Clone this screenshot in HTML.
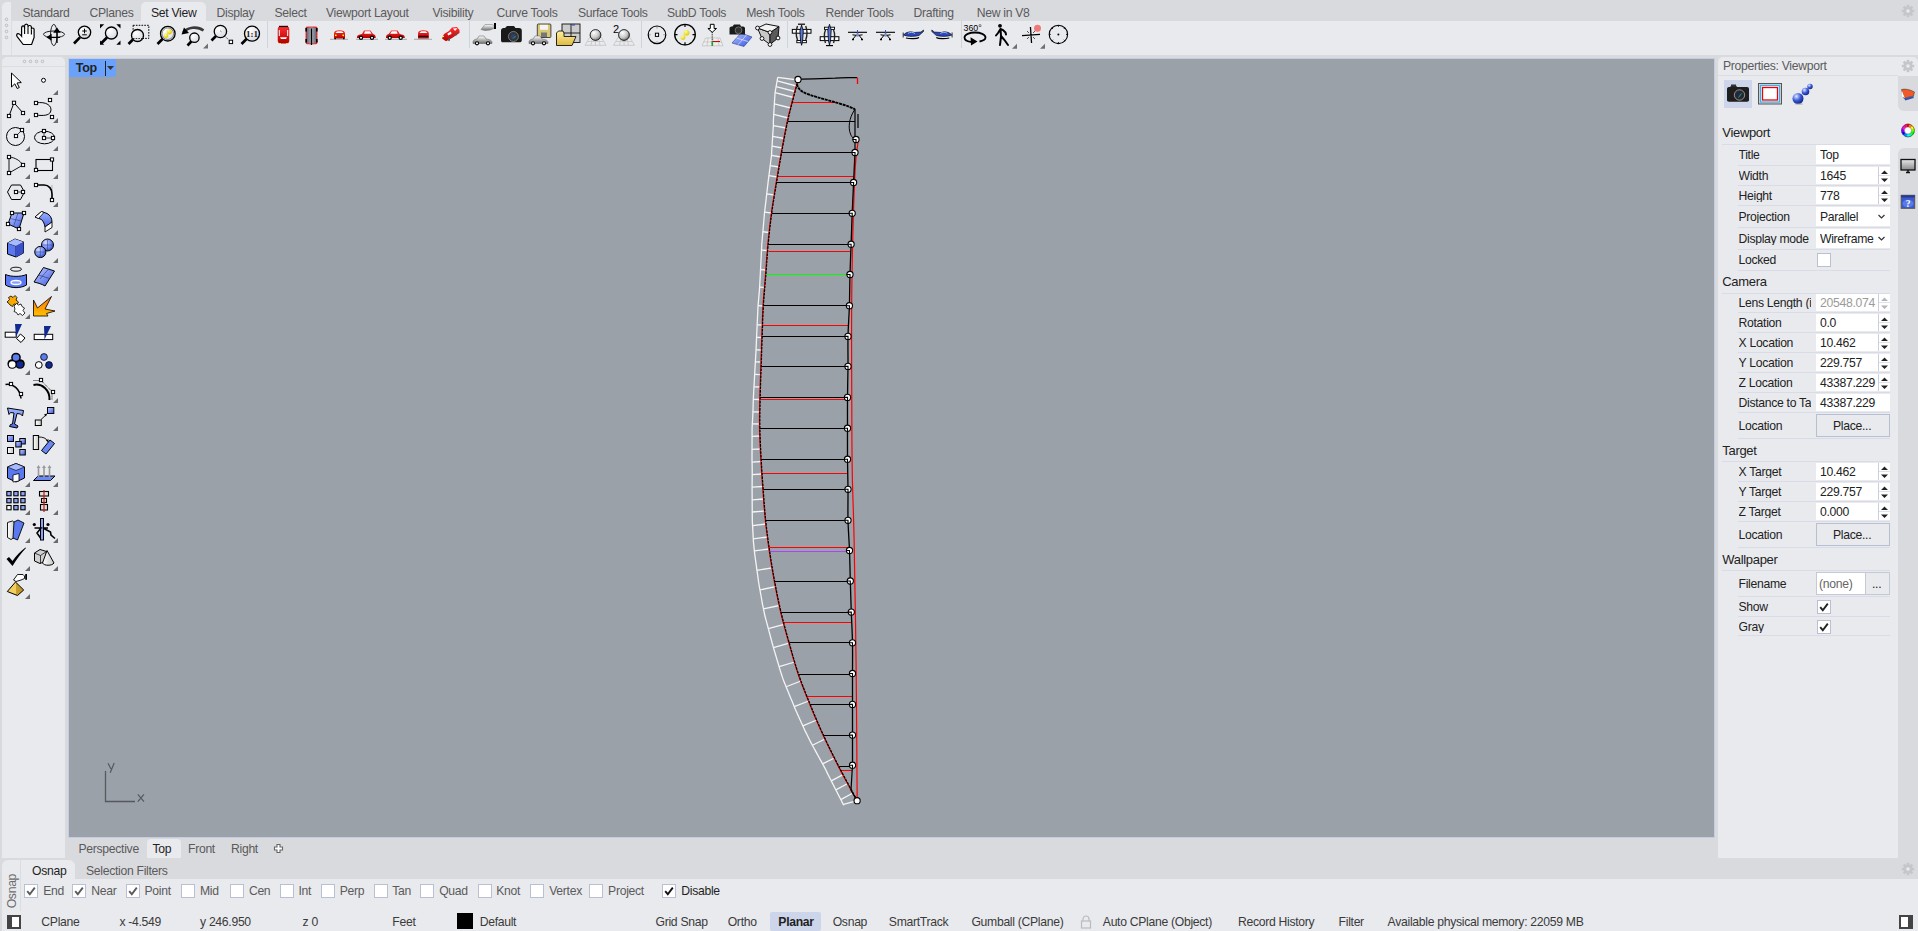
<!DOCTYPE html>
<html><head><meta charset="utf-8"><style>
html,body{margin:0;padding:0;}
body{width:1918px;height:931px;position:relative;overflow:hidden;background:#d9dade;font-family:"Liberation Sans", sans-serif;}
.t{position:absolute;white-space:nowrap;line-height:1;}
</style></head><body>
<div style="position:absolute;left:2px;top:2px;width:1916px;height:53px;background:#e9eaee;border-radius:5px 0 0 0;"></div><div style="position:absolute;left:11px;top:0px;width:1907px;height:21px;background:#d9dade;"></div><div style="position:absolute;left:140.5px;top:2px;width:65.5px;height:19px;background:#e9eaee;border-radius:5px 5px 0 0;"></div><div style="position:absolute;left:11px;top:21px;width:1px;height:34px;background:#dcdde1;"></div><svg style="position:absolute;left:4px;top:16px;" width="6" height="6" viewBox="0 0 6 6"><circle cx="2.5" cy="3.4" r="1.3" fill="none" stroke="#b5b7bd" stroke-width="0.9"/></svg><svg style="position:absolute;left:4px;top:22px;" width="6" height="6" viewBox="0 0 6 6"><circle cx="2.5" cy="3.4" r="1.3" fill="none" stroke="#b5b7bd" stroke-width="0.9"/></svg><svg style="position:absolute;left:4px;top:28px;" width="6" height="6" viewBox="0 0 6 6"><circle cx="2.5" cy="3.4" r="1.3" fill="none" stroke="#b5b7bd" stroke-width="0.9"/></svg><svg style="position:absolute;left:4px;top:34px;" width="6" height="6" viewBox="0 0 6 6"><circle cx="2.5" cy="3.4" r="1.3" fill="none" stroke="#b5b7bd" stroke-width="0.9"/></svg><div class="t" style="left:22.5px;top:6.70px;font-size:12.2px;letter-spacing:-0.30px;color:#5b5b5b;">Standard</div><div class="t" style="left:89.5px;top:6.70px;font-size:12.2px;letter-spacing:-0.30px;color:#5b5b5b;">CPlanes</div><div class="t" style="left:151px;top:6.70px;font-size:12.2px;letter-spacing:-0.30px;color:#1f1f1f;">Set View</div><div class="t" style="left:216.5px;top:6.70px;font-size:12.2px;letter-spacing:-0.30px;color:#5b5b5b;">Display</div><div class="t" style="left:274.5px;top:6.70px;font-size:12.2px;letter-spacing:-0.30px;color:#5b5b5b;">Select</div><div class="t" style="left:326px;top:6.70px;font-size:12.2px;letter-spacing:-0.30px;color:#5b5b5b;">Viewport Layout</div><div class="t" style="left:432.5px;top:6.70px;font-size:12.2px;letter-spacing:-0.30px;color:#5b5b5b;">Visibility</div><div class="t" style="left:496.6px;top:6.70px;font-size:12.2px;letter-spacing:-0.30px;color:#5b5b5b;">Curve Tools</div><div class="t" style="left:577.9px;top:6.70px;font-size:12.2px;letter-spacing:-0.30px;color:#5b5b5b;">Surface Tools</div><div class="t" style="left:667px;top:6.70px;font-size:12.2px;letter-spacing:-0.30px;color:#5b5b5b;">SubD Tools</div><div class="t" style="left:746.2px;top:6.70px;font-size:12.2px;letter-spacing:-0.30px;color:#5b5b5b;">Mesh Tools</div><div class="t" style="left:825.6px;top:6.70px;font-size:12.2px;letter-spacing:-0.30px;color:#5b5b5b;">Render Tools</div><div class="t" style="left:913.5px;top:6.70px;font-size:12.2px;letter-spacing:-0.30px;color:#5b5b5b;">Drafting</div><div class="t" style="left:976.7px;top:6.70px;font-size:12.2px;letter-spacing:-0.30px;color:#5b5b5b;">New in V8</div><div style="position:absolute;left:267px;top:21px;width:1px;height:27px;background:#cfd3dc;"></div><div style="position:absolute;left:469px;top:21px;width:1px;height:27px;background:#cfd3dc;"></div><div style="position:absolute;left:641px;top:21px;width:1px;height:27px;background:#cfd3dc;"></div><div style="position:absolute;left:787px;top:21px;width:1px;height:27px;background:#cfd3dc;"></div><div style="position:absolute;left:961px;top:21px;width:1px;height:27px;background:#cfd3dc;"></div><svg style="position:absolute;left:0px;top:0px;" width="1100" height="56" viewBox="0 0 1100 56"><defs>
<radialGradient id="glass" cx="0.35" cy="0.3" r="0.8"><stop offset="0" stop-color="#ffffff"/><stop offset="1" stop-color="#d5d7dc"/></radialGradient>
<radialGradient id="ball" cx="0.35" cy="0.3" r="0.75"><stop offset="0" stop-color="#ffffff"/><stop offset="0.6" stop-color="#c8c8c8"/><stop offset="1" stop-color="#6a6a6a"/></radialGradient>
<radialGradient id="yball" cx="0.35" cy="0.3" r="0.75"><stop offset="0" stop-color="#ffff90"/><stop offset="1" stop-color="#e0c800"/></radialGradient>
<linearGradient id="redg" x1="0" y1="0" x2="0" y2="1"><stop offset="0" stop-color="#ff3030"/><stop offset="1" stop-color="#b00000"/></linearGradient>
<linearGradient id="grayg" x1="0" y1="0" x2="1" y2="0"><stop offset="0" stop-color="#5a5f6a"/><stop offset="0.5" stop-color="#a8adb8"/><stop offset="1" stop-color="#5a5f6a"/></linearGradient>
<linearGradient id="carg" x1="0" y1="0" x2="0" y2="1"><stop offset="0" stop-color="#ffffff"/><stop offset="1" stop-color="#707070"/></linearGradient>
<linearGradient id="blueg" x1="0" y1="0" x2="1" y2="1"><stop offset="0" stop-color="#b8c8ff"/><stop offset="1" stop-color="#3050e0"/></linearGradient>
<linearGradient id="folderg" x1="0" y1="0" x2="0" y2="1"><stop offset="0" stop-color="#fff0a0"/><stop offset="1" stop-color="#e0b840"/></linearGradient>
</defs><path d="M23.2 44.5 L17.2 36.6 C16.2 35.2 16.6 33.6 18.2 33.6 C19.2 33.6 20.3 34.6 21.6 36.2 L21.6 28.2 C21.6 26.5 22.3 25.8 23.1 25.8 C23.9 25.8 24.6 26.5 24.6 28.2 L24.6 26 C24.6 24.8 25.3 24.1 26.3 24.1 C27.3 24.1 28 24.8 28 26 L28 27.5 C28 26.2 28.7 25.5 29.7 25.5 C30.7 25.5 31.4 26.2 31.4 27.5 L31.4 29.6 C31.4 28.6 32 28 32.7 28 C33.5 28 34.1 28.6 34.1 29.6 L34.1 37.5 L31.6 44.5 Z" fill="#fafafa" stroke="#000" stroke-width="1.2"/><path d="M24.6 28 V34 M28 27.5 V34 M31.4 29.6 V34.5" stroke="#000" stroke-width="1.1"/><ellipse cx="54" cy="34.3" rx="10.5" ry="3.3" fill="none" stroke="#222" stroke-width="1"/><ellipse cx="53.8" cy="35" rx="3.3" ry="10.6" fill="none" stroke="#222" stroke-width="1"/><path d="M57 43 V31 M54.5 32 L57 28.5 L59.5 32 Z M60 37.3 H50 M51 35 L47.5 37.3 L51 39.6 Z" stroke="#000" stroke-width="1.3" fill="#000"/><path d="M74 43.5 L80 37.3" stroke="#000" stroke-width="2.6" stroke-linecap="butt"/><circle cx="84.5" cy="32.3" r="6.2" fill="url(#glass)" stroke="#000" stroke-width="1.3"/><path d="M82.2 31 H86.8 M84.5 28.7 V33.3 M82.2 34.8 H86.8" stroke="#000" stroke-width="1"/><path d="M101.5 43 L107 37.5" stroke="#000" stroke-width="2.6" stroke-linecap="butt"/><circle cx="111.4" cy="33" r="6" fill="url(#glass)" stroke="#000" stroke-width="1.3"/><path d="M100 24.3 H104.2 L100 28.5 Z M120.5 24.3 H116.3 L120.5 28.5 Z M100 44.8 H104.2 L100 40.6 Z M120.5 44.8 H116.3 L120.5 40.6 Z" fill="#000"/><rect x="133.1" y="25.3" width="15.7" height="13.1" fill="none" stroke="#000" stroke-width="1" stroke-dasharray="1.6 1.2"/><path d="M128.5 44 L133 39.5" stroke="#000" stroke-width="2.6" stroke-linecap="butt"/><circle cx="137.5" cy="35.5" r="6" fill="url(#glass)" stroke="#000" stroke-width="1.3"/><path d="M133 38.5 H142" stroke="#000" stroke-width="0.8" stroke-dasharray="1.5 1.2"/><path d="M157.5 44 L162.5 39" stroke="#000" stroke-width="2.6" stroke-linecap="butt"/><circle cx="167.8" cy="33.7" r="7.3" fill="url(#glass)" stroke="#000" stroke-width="1.3"/><circle cx="167.8" cy="33.7" r="5.8" fill="none" stroke="#555" stroke-width="0.7"/><circle cx="169.3" cy="31.8" r="2.6" fill="url(#yball)"/><circle cx="166" cy="35.8" r="2.3" fill="url(#yball)"/><path d="M183.5 32.5 C187 27.5 197 25.5 203.5 30.5" fill="none" stroke="#3a3a3a" stroke-width="2.6"/><path d="M184 27.5 L181.5 34.5 L189 33 Z" fill="#000"/><path d="M187.5 45.5 L191.3 41.5" stroke="#000" stroke-width="2.6" stroke-linecap="butt"/><circle cx="194.4" cy="37.7" r="4.7" fill="url(#glass)" stroke="#000" stroke-width="1.3"/><path d="M208 48.5 L203 48.5 L208 43.5 Z" fill="#6f6f6f"/><path d="M211.5 40.5 L216 36" stroke="#000" stroke-width="2.6" stroke-linecap="butt"/><circle cx="220.4" cy="31.5" r="6.2" fill="url(#glass)" stroke="#000" stroke-width="1.3"/><path d="M220.5 31 L222 32.3 M224 35.5 L230 41" stroke="#000" stroke-width="0.9" stroke-dasharray="1 1.3"/><rect x="229.2" y="40.2" width="3.4" height="3.4" fill="#fff" stroke="#000" stroke-width="1"/><path d="M241.5 44 L246.5 39" stroke="#000" stroke-width="2.6" stroke-linecap="butt"/><circle cx="252" cy="33.7" r="7.5" fill="url(#glass)" stroke="#000" stroke-width="1.3"/><text x="252" y="37.2" font-family="Liberation Serif" font-weight="bold" font-size="9" text-anchor="middle" fill="#222">1:1</text><rect x="278" y="26.5" width="11" height="16.8" rx="2.5" fill="url(#redg)" stroke="#c00" stroke-width="0.5"/><rect x="279" y="25.8" width="9" height="1.3" fill="#111"/><path d="M279.3 30 V36 M287.7 30 V36" stroke="#fff" stroke-width="1"/><path d="M280 37.2 H287 L286 39 H281 Z" fill="#fff"/><path d="M279.5 43.5 H281 M286 43.5 H287.5" stroke="#ff0" stroke-width="0.8"/><rect x="306" y="27" width="11" height="16.8" rx="1" fill="url(#grayg)" stroke="#f00" stroke-width="0.8"/><path d="M306.2 28 V31.5 M316.8 28 V31.5 M306.2 39 V42.5 M316.8 39 V42.5" stroke="#000" stroke-width="1.6"/><path d="M311.5 28.5 V45" stroke="#000" stroke-width="1.2"/><path d="M330 39.3 H348" stroke="#8a8a8a" stroke-width="0.7"/><path d="M334 38.5 V33.5 C334 31 336 30.2 339.5 30.2 C343 30.2 345 31 345 33.5 V38.5 Z" fill="url(#redg)"/><path d="M335.5 33 C336 31.5 337.5 31.2 339.5 31.2 C341.5 31.2 343 31.5 343.5 33 Z" fill="#fff"/><rect x="335" y="34.6" width="1.6" height="1.5" fill="#ff0"/><rect x="342.4" y="34.6" width="1.6" height="1.5" fill="#ff0"/><path d="M334.5 38.6 H336 M343 38.6 H344.5" stroke="#000" stroke-width="1.3"/><path d="M356 39.3 H378" stroke="#8a8a8a" stroke-width="0.7"/><path d="M357 37 C357 35 359 34.5 362 34 L364 30.5 H370.5 L373 34 C375 34.5 375.7 35.5 375.7 37.5 L375.7 38 H357 Z" fill="url(#redg)"/><path d="M365 31.3 H370 L371.5 33.8 H364 Z" fill="#fff"/><circle cx="361" cy="37.8" r="1.6" fill="#fff" stroke="#000" stroke-width="1.2"/><circle cx="372" cy="37.8" r="1.6" fill="#fff" stroke="#000" stroke-width="1.2"/><path d="M385 39.3 H407" stroke="#8a8a8a" stroke-width="0.7"/><path d="M404.7 37 C404.7 35 402.7 34.5 399.7 34 L397.7 30.5 H391.2 L388.7 34 C386.7 34.5 386 35.5 386 37.5 L386 38 H404.7 Z" fill="url(#redg)"/><path d="M396.7 31.3 H391.7 L390.2 33.8 H397.7 Z" fill="#fff"/><circle cx="389.7" cy="37.8" r="1.6" fill="#fff" stroke="#000" stroke-width="1.2"/><circle cx="400.7" cy="37.8" r="1.6" fill="#fff" stroke="#000" stroke-width="1.2"/><path d="M414 39.3 H432" stroke="#8a8a8a" stroke-width="0.7"/><path d="M418 38.5 V33.5 C418 31 420 30.2 423.4 30.2 C426.8 30.2 428.8 31 428.8 33.5 V38.5 Z" fill="url(#redg)"/><path d="M419.5 33 C420 31.5 421.5 31.2 423.4 31.2 C425.3 31.2 426.8 31.5 427.3 33 Z" fill="#fff"/><rect x="418.5" y="35.8" width="9.8" height="1.2" fill="#000"/><path d="M442 38.5 L444 34 L449 31 L452 27.5 L457 27 L459.5 30 L459.5 33 L452 38 L446 41.3 Z" fill="url(#redg)"/><path d="M447.5 33.5 L451 31.5 L451.5 34 L448 35.5 Z M453 28.5 L457.5 28.3 L455 31 Z" fill="#fff"/><ellipse cx="449" cy="39.5" rx="1" ry="1.8" fill="#555"/><ellipse cx="456" cy="34" rx="1" ry="1.6" fill="#555"/><rect x="442.5" y="36" width="1.5" height="1" fill="#ff0"/><path d="M473 42 C473 40 475 39.3 477 39 L479 36 H484 L486 39 C490 39.5 492 40.5 492 42.5 V43.5 H473 Z" fill="url(#carg)" stroke="#555" stroke-width="0.5"/><circle cx="477" cy="43.3" r="1.6" fill="#fff" stroke="#000" stroke-width="1.1"/><circle cx="488" cy="43.3" r="1.6" fill="#fff" stroke="#000" stroke-width="1.1"/><path d="M481 29.5 L485 24.5 H492 L495 26 V28 L490 30 L485 30.5 Z" fill="url(#carg)" stroke="#666" stroke-width="0.5"/><rect x="494" y="23" width="2" height="6" fill="#000"/><path d="M501 30.5 C501 28.5 502.5 28 505 28 L507 26 H514 L515.5 28 H519 C521 28 521.8 29 521.8 30.5 V40 C521.8 41.5 521 42.3 519.5 42.3 H503 C501.5 42.3 501 41.5 501 40 Z" fill="#1a1a1a"/><circle cx="513.4" cy="36.5" r="5" fill="#333" stroke="#999" stroke-width="0.7"/><circle cx="513.4" cy="36.5" r="2.8" fill="#2a4070"/><path d="M513 38.5 L515.5 36" stroke="#3a9a3a" stroke-width="1"/><rect x="537.3" y="24" width="13.6" height="13.5" rx="1" fill="#d8c878" stroke="#222" stroke-width="0.8"/><rect x="540" y="24.8" width="8" height="5" fill="#f4f4f4"/><rect x="541" y="32.5" width="6" height="4.5" fill="#777"/><path d="M529 42 C529 40 531 39.3 533 39 L535 36 H540 L542 39 C546 39.5 548 40.5 548 42.5 V43.5 H529 Z" fill="url(#carg)" stroke="#555" stroke-width="0.5"/><circle cx="533" cy="43.3" r="1.6" fill="#fff" stroke="#000" stroke-width="1.1"/><circle cx="544" cy="43.3" r="1.6" fill="#fff" stroke="#000" stroke-width="1.1"/><rect x="562" y="24" width="18" height="18.5" fill="#ccc" stroke="#111" stroke-width="0.9"/><path d="M571 24 V42.5 M562 33 H580" stroke="#111" stroke-width="0.9"/><rect x="572" y="24.5" width="3" height="1" fill="#2040c0"/><path d="M556.5 45.5 V33 L558.5 31 H563 L564 33 V36.5 H576 L572 45.5 Z" fill="url(#folderg)" stroke="#111" stroke-width="0.9"/><path d="M585.0 45.3 L589.5 37.5 H601.5 L606.0 45.3 Z M587.2 41.5 H603.8 M592.5 37.5 L591.0 45.3 M598.5 37.5 L600.0 45.3 M595.5 37.5 V45.3" fill="none" stroke="#c4c4c4" stroke-width="0.8"/><circle cx="595.5" cy="35" r="5.4" fill="url(#ball)" stroke="#111" stroke-width="0.9"/><path d="M613.5 45.3 L618 37.5 H630 L634.5 45.3 Z M615.7 41.5 H632.3 M621 37.5 L619.5 45.3 M627 37.5 L628.5 45.3 M624 37.5 V45.3" fill="none" stroke="#c4c4c4" stroke-width="0.8"/><circle cx="624" cy="35" r="5.4" fill="url(#ball)" stroke="#111" stroke-width="0.9"/><text x="613" y="32.8" font-family="Liberation Sans" font-size="11" fill="#000">2</text><circle cx="657" cy="34.8" r="8.8" fill="none" stroke="#000" stroke-width="1.2"/><path d="M649 34.8 H650.8 M663.2 34.8 H665 M657 27 V28.5 M657 41.2 V42.6" stroke="#888" stroke-width="0.8"/><rect x="655.4" y="33.2" width="3.2" height="3.2" fill="#fff" stroke="#000" stroke-width="1"/><circle cx="685" cy="34.6" r="10.3" fill="none" stroke="#000" stroke-width="1.3"/><path d="M674.5 34.6 H677.5 M692.5 34.6 H695.5 M685 24 V27 M685 42.3 V45.3" stroke="#000" stroke-width="1.2"/><circle cx="686.6" cy="32.8" r="2.8" fill="url(#yball)"/><circle cx="683" cy="37.5" r="2.4" fill="url(#yball)"/><path d="M702 45.8 L705.5 38 H720 L723 45.8 Z M703.5 42 H722 M708 38 L707 45.8 M713 38 V45.8 M718 38 L719 45.8" fill="#eee" stroke="#bbb" stroke-width="0.7"/><path d="M712.2 32 V45.5" stroke="#000" stroke-width="0.9" stroke-dasharray="1 0.8"/><path d="M712.2 41.5 V46" stroke="#0a0" stroke-width="1.1"/><path d="M713 41.5 H720" stroke="#d00" stroke-width="1"/><path d="M710.3 24.3 H714.1 V28.5 H716.5 L712.2 32.3 L707.9 28.5 H710.3 Z" fill="#fff" stroke="#000" stroke-width="1"/><path d="M732 43 L741 33 L752 37 L744 46.5 Z" fill="url(#blueg)" stroke="#2a3a8a" stroke-width="0.6"/><path d="M736.5 38 L748 41.5 M746.5 35 L738 44.7" stroke="#eaeaff" stroke-width="0.7"/><path d="M729.5 28.5 C729.5 27 730.5 26.5 732.5 26.5 L734 24.5 H740 L741 26.5 H743 C744.5 26.5 745 27.5 745 28.5 V34.5 H729.5 Z" fill="#1a1a1a"/><circle cx="738.5" cy="30.3" r="3.4" fill="#333" stroke="#999" stroke-width="0.6"/><path d="M757.5 28 L770 32.5 L770 44.5 L762 38.5 Z" fill="#c8c8c8" stroke="#111" stroke-width="1"/><path d="M770 32.5 L779 26.5 L778 38 L770 44.5 Z" fill="#5a5a5a" stroke="#111" stroke-width="1"/><path d="M757.5 28 L766 24 L779 26.5 L770 32.5 Z" fill="#f2f2f2" stroke="#111" stroke-width="1"/><circle cx="757.5" cy="28" r="1.9" fill="#fff" stroke="#000" stroke-width="0.9"/><circle cx="770" cy="32.5" r="1.9" fill="#fff" stroke="#000" stroke-width="0.9"/><circle cx="762" cy="38.5" r="1.9" fill="#fff" stroke="#000" stroke-width="0.9"/><circle cx="778" cy="38" r="1.9" fill="#fff" stroke="#000" stroke-width="0.9"/><circle cx="770" cy="44.5" r="1.9" fill="#fff" stroke="#000" stroke-width="0.9"/><rect x="792.3" y="29.4" width="18.7" height="3.8" fill="#fff" stroke="#000" stroke-width="1"/><rect x="796.8" y="40.5" width="9.6" height="2.2" fill="#fff" stroke="#000" stroke-width="0.9"/><path d="M798 24.2 H805" stroke="#000" stroke-width="1.2"/><path d="M801.6 25 L803.3 31 L802.6 41 L801.6 45.3 L800.6 41 L799.9 31 Z" fill="#5878e0" stroke="#000" stroke-width="0.8"/><path d="M797.5 26 C796 30 796 36 797.5 40 M805.7 26 C807.2 30 807.2 36 805.7 40" fill="none" stroke="#222" stroke-width="1.4"/><rect x="820.2" y="36.7" width="18.7" height="3.9" fill="#fff" stroke="#000" stroke-width="1"/><rect x="824.5" y="27.2" width="10" height="2.2" fill="#fff" stroke="#000" stroke-width="0.9"/><path d="M826 45.6 H833" stroke="#000" stroke-width="1.2"/><path d="M829.5 24.3 L831.2 30 L830.5 41 L829.5 45 L828.5 41 L827.8 30 Z" fill="#5878e0" stroke="#000" stroke-width="0.8"/><path d="M825.5 30 C824 33 824 39 825.5 43 M833.5 30 C835 33 835 39 833.5 43" fill="none" stroke="#222" stroke-width="1.4"/><path d="M848.0 32.3 H867.0" stroke="#000" stroke-width="1.1"/><path d="M857.5 30 V35" stroke="#3050d0" stroke-width="1"/><circle cx="857.5" cy="35" r="1.8" fill="#8090c0"/><path d="M852.5 34.8 L856.0 35.3 L853.0 39 M862.5 34.8 L859.0 35.3 L862.0 39" fill="none" stroke="#000" stroke-width="1"/><path d="M852.0 39.5 H854.0 M861.0 39.5 H863.0" stroke="#000" stroke-width="1.3"/><path d="M876.0 32.3 H895.0" stroke="#000" stroke-width="1.1"/><path d="M885.5 30 V35" stroke="#3050d0" stroke-width="1"/><circle cx="885.5" cy="35" r="1.8" fill="#8090c0"/><path d="M880.5 34.8 L884.0 35.3 L881.0 39 M890.5 34.8 L887.0 35.3 L890.0 39" fill="none" stroke="#000" stroke-width="1"/><path d="M880.0 39.5 H882.0 M889.0 39.5 H891.0" stroke="#000" stroke-width="1.3"/><path d="M903.5 35 C906 32 911 31 914 32.5 L921 32 L923.5 30 L923.5 31.5 L919 35.5 C914 36.5 908 37 903.5 35 Z" fill="#2848c0" stroke="#000" stroke-width="0.6"/><path d="M908 33.3 C910 32 913 32 915 33.5" fill="none" stroke="#c8d4ff" stroke-width="0.8"/><path d="M903.2 32.5 V37.5" stroke="#000" stroke-width="0.8"/><path d="M906 38 C910 39 917 39 919 37.5" fill="none" stroke="#000" stroke-width="1.2"/><path d="M951.8 35 C949.3 32 944.3 31 941.3 32.5 L934.3 32 L931.8 30 L931.8 31.5 L936.3 35.5 C941.3 36.5 947.3 37 951.8 35 Z" fill="#2848c0" stroke="#000" stroke-width="0.6"/><path d="M947.3 33.3 C945.3 32 942.3 32 940.3 33.5" fill="none" stroke="#c8d4ff" stroke-width="0.8"/><path d="M952.1 32.5 V37.5" stroke="#000" stroke-width="0.8"/><path d="M949.3 38 C945.3 39 938.3 39 936.3 37.5" fill="none" stroke="#000" stroke-width="1.2"/><text x="963.5" y="30.6" font-family="Liberation Sans" font-size="8.8" fill="#000">360°</text><path d="M972 42 C966 41.5 964.5 39.5 964.5 37.5 C964.5 34.5 969.5 32.5 975 32.5 C980.5 32.5 985.5 34.5 985.5 37.5 C985.5 39.5 983 40.8 979.5 41.5" fill="none" stroke="#000" stroke-width="1.8"/><path d="M970.5 37.3 L977.5 41.5 L971 45.5 Z" fill="#000"/><circle cx="1000" cy="25.8" r="1.9" fill="#000"/><path d="M1000.5 29 L998 33 L996 35.5 M1000.5 29 L1003 30 L1005.5 32.5 L1006 34.5 M1000.5 29 L1001 36 L1000.5 41 L1000 45 M1001 36 L1004.5 40 L1008 45" fill="none" stroke="#000" stroke-width="2" stroke-linecap="round"/><path d="M1017 48.8 L1012 48.8 L1017 43.8 Z" fill="#6f6f6f"/><path d="M1031 27 V43 M1022 35 H1040" stroke="#000" stroke-width="1.3" transform="rotate(-4 1031 35)"/><path d="M1027 31 L1029 33 M1035 31 L1033 33 M1027 39 L1029 37 M1035 39 L1033 37" stroke="#444" stroke-width="0.9"/><circle cx="1037.5" cy="28.3" r="3.5" fill="#f07878"/><path d="M1045 48.8 L1040 48.8 L1045 43.8 Z" fill="#6f6f6f"/><circle cx="1058.4" cy="34.4" r="9.2" fill="none" stroke="#000" stroke-width="1.1"/><path d="M1058.4 25.2 V26.8 M1058.4 42 V43.6 M1049.2 34.4 H1050.8 M1066 34.4 H1067.6 M1052 28 L1053 29 M1064.8 28 L1063.8 29 M1052 40.8 L1053 39.8 M1064.8 40.8 L1063.8 39.8" stroke="#000" stroke-width="0.9"/><circle cx="1058.4" cy="34.4" r="1" fill="#000"/></svg><div style="position:absolute;left:2px;top:57px;width:63px;height:801px;background:#e9eaee;border-radius:5px 5px 0 0;"></div><div style="position:absolute;left:2px;top:66px;width:63px;height:1px;background:#dcdde1;"></div><svg style="position:absolute;left:21px;top:58px;" width="6" height="6" viewBox="0 0 6 6"><circle cx="3.5" cy="3.4" r="1.3" fill="none" stroke="#b5b7bd" stroke-width="0.9"/></svg><svg style="position:absolute;left:27px;top:58px;" width="6" height="6" viewBox="0 0 6 6"><circle cx="3.5" cy="3.4" r="1.3" fill="none" stroke="#b5b7bd" stroke-width="0.9"/></svg><svg style="position:absolute;left:33px;top:58px;" width="6" height="6" viewBox="0 0 6 6"><circle cx="3.5" cy="3.4" r="1.3" fill="none" stroke="#b5b7bd" stroke-width="0.9"/></svg><svg style="position:absolute;left:39px;top:58px;" width="6" height="6" viewBox="0 0 6 6"><circle cx="3.5" cy="3.4" r="1.3" fill="none" stroke="#b5b7bd" stroke-width="0.9"/></svg><svg style="position:absolute;left:0px;top:60px;" width="66" height="560" viewBox="0 0 66 560"><g transform="translate(0 -60)"><defs>
<linearGradient id="lb" x1="0" y1="0" x2="1" y2="1"><stop offset="0" stop-color="#c4d0ff"/><stop offset="1" stop-color="#3a58e0"/></linearGradient>
<linearGradient id="lb2" x1="0" y1="0" x2="0" y2="1"><stop offset="0" stop-color="#9fb4ff"/><stop offset="1" stop-color="#4a66e6"/></linearGradient>
<radialGradient id="sph" cx="0.35" cy="0.3" r="0.8"><stop offset="0" stop-color="#d8e0ff"/><stop offset="0.6" stop-color="#6a84f0"/><stop offset="1" stop-color="#2a40b0"/></radialGradient>
<linearGradient id="org" x1="0" y1="0" x2="0" y2="1"><stop offset="0" stop-color="#ff7000"/><stop offset="1" stop-color="#ffc000"/></linearGradient>
<linearGradient id="wg" x1="0" y1="0" x2="1" y2="0"><stop offset="0" stop-color="#ffffff"/><stop offset="1" stop-color="#c8c8c8"/></linearGradient>
<linearGradient id="gold" x1="0" y1="0" x2="1" y2="0"><stop offset="0" stop-color="#f0d070"/><stop offset="0.55" stop-color="#f4cc58"/><stop offset="0.56" stop-color="#c8a030"/><stop offset="1" stop-color="#c09020"/></linearGradient>
</defs><path d="M11.5 73 V87 L14.8 83.8 L17.2 88.5 L19.3 87.5 L17 83 L21.3 82.5 Z" fill="#fff" stroke="#000" stroke-width="1"/><circle cx="43.5" cy="80.3" r="2" fill="#fff" stroke="#000" stroke-width="1"/><path d="M58 95 L53 95 L58 90 Z" fill="#6a6a6a"/><path d="M9 116 L14 102.8 L23 113" fill="none" stroke="#000" stroke-width="1"/><rect x="7.40" y="114.40" width="3.2" height="3.2" fill="#fff" stroke="#000" stroke-width="1"/><rect x="12.40" y="101.20" width="3.2" height="3.2" fill="#fff" stroke="#000" stroke-width="1"/><rect x="21.40" y="111.40" width="3.2" height="3.2" fill="#fff" stroke="#000" stroke-width="1"/><path d="M36 103 C46 101 53 106 50.5 112 C49 115.5 43 116 36 115" fill="none" stroke="#000" stroke-width="1"/><rect x="34.40" y="101.40" width="3.2" height="3.2" fill="#fff" stroke="#000" stroke-width="1"/><rect x="48.40" y="98.40" width="3.2" height="3.2" fill="#fff" stroke="#000" stroke-width="1"/><rect x="34.40" y="113.40" width="3.2" height="3.2" fill="#fff" stroke="#000" stroke-width="1"/><rect x="50.40" y="115.40" width="3.2" height="3.2" fill="#fff" stroke="#000" stroke-width="1"/><path d="M30 123 L25 123 L30 118 Z" fill="#6a6a6a"/><path d="M58 123 L53 123 L58 118 Z" fill="#6a6a6a"/><circle cx="15.5" cy="136.5" r="9" fill="none" stroke="#000" stroke-width="1"/><path d="M16 136 L22 130" stroke="#000" stroke-width="0.7"/><rect x="14.40" y="134.40" width="3.2" height="3.2" fill="#fff" stroke="#000" stroke-width="1"/><rect x="20.40" y="128.40" width="3.2" height="3.2" fill="#fff" stroke="#000" stroke-width="1"/><ellipse cx="44.5" cy="137.5" rx="10" ry="6.3" fill="none" stroke="#000" stroke-width="1"/><path d="M44 131 V138 H53" fill="none" stroke="#000" stroke-width="0.7"/><rect x="42.40" y="129.40" width="3.2" height="3.2" fill="#fff" stroke="#000" stroke-width="1"/><rect x="42.40" y="136.40" width="3.2" height="3.2" fill="#fff" stroke="#000" stroke-width="1"/><rect x="51.40" y="136.40" width="3.2" height="3.2" fill="#fff" stroke="#000" stroke-width="1"/><path d="M30 151 L25 151 L30 146 Z" fill="#6a6a6a"/><path d="M58 151 L53 151 L58 146 Z" fill="#6a6a6a"/><path d="M9 157 C15 157.5 20 160.5 23 165 M23 165 L9 173 M9 173 V157" fill="none" stroke="#000" stroke-width="0.9"/><rect x="7.40" y="155.40" width="3.2" height="3.2" fill="#fff" stroke="#000" stroke-width="1"/><rect x="21.40" y="163.40" width="3.2" height="3.2" fill="#fff" stroke="#000" stroke-width="1"/><rect x="7.40" y="171.40" width="3.2" height="3.2" fill="#fff" stroke="#000" stroke-width="1"/><rect x="36" y="159.5" width="16.5" height="11" fill="none" stroke="#000" stroke-width="1.1"/><rect x="34.40" y="168.40" width="3.2" height="3.2" fill="#fff" stroke="#000" stroke-width="1"/><rect x="50.40" y="157.90" width="3.2" height="3.2" fill="#fff" stroke="#000" stroke-width="1"/><path d="M30 179 L25 179 L30 174 Z" fill="#6a6a6a"/><path d="M58 179 L53 179 L58 174 Z" fill="#6a6a6a"/><path d="M7.5 192 L11.5 185 H20.5 L24.5 192 L20.5 199.5 H11.5 Z" fill="none" stroke="#000" stroke-width="1"/><path d="M16 192 H23" stroke="#000" stroke-width="0.7"/><rect x="14.40" y="190.40" width="3.2" height="3.2" fill="#fff" stroke="#000" stroke-width="1"/><rect x="21.40" y="190.40" width="3.2" height="3.2" fill="#fff" stroke="#000" stroke-width="1"/><path d="M52 185 V200" stroke="#999" stroke-width="0.7"/><path d="M36 185 H44 C49 185 52 189 52 194 V200" fill="none" stroke="#000" stroke-width="1.6"/><rect x="34.40" y="183.40" width="3.2" height="3.2" fill="#fff" stroke="#000" stroke-width="1"/><rect x="50.40" y="198.40" width="3.2" height="3.2" fill="#fff" stroke="#000" stroke-width="1"/><path d="M30 207 L25 207 L30 202 Z" fill="#6a6a6a"/><path d="M58 207 L53 207 L58 202 Z" fill="#6a6a6a"/><path d="M12 213 H24 L19 229 L8 224 Z" fill="url(#lb)" stroke="#000" stroke-width="1"/><path d="M10 218.5 L21.5 221 M18 213 L13.5 226.5" stroke="#2a3a90" stroke-width="0.6"/><rect x="10.40" y="211.40" width="3.2" height="3.2" fill="#fff" stroke="#000" stroke-width="1"/><rect x="22.40" y="211.40" width="3.2" height="3.2" fill="#fff" stroke="#000" stroke-width="1"/><rect x="6.40" y="222.40" width="3.2" height="3.2" fill="#fff" stroke="#000" stroke-width="1"/><rect x="17.40" y="227.40" width="3.2" height="3.2" fill="#fff" stroke="#000" stroke-width="1"/><path d="M35 217 L41.5 211.5 L47 213.5 C50 215 52 218 52 222 L45 227 C44.5 224 43.5 221.5 41.5 219.5 Z" fill="url(#lb2)" stroke="#000" stroke-width="1"/><path d="M35 217 L41.5 211.5 L44 212.5 L38.5 218.5 Z" fill="#fff" stroke="#000" stroke-width="0.8"/><path d="M52 222 V227.5 L45 232 V227 Z" fill="#fff" stroke="#000" stroke-width="0.9"/><path d="M30 235 L25 235 L30 230 Z" fill="#6a6a6a"/><path d="M58 235 L53 235 L58 230 Z" fill="#6a6a6a"/><path d="M7.5 243 L15 239 L23.5 242 V253 L16 257 L7.5 254 Z" fill="#5a78f0" stroke="#000" stroke-width="1"/><path d="M7.5 243 L16 246 L23.5 242 M16 246 V257" fill="none" stroke="#000" stroke-width="0.7"/><path d="M7.5 243 L15 239 L23.5 242 L16 246 Z" fill="#a8baff"/><path d="M16 246 L23.5 242 V253 L16 257 Z" fill="#3a50c8"/><circle cx="47.5" cy="245" r="6" fill="url(#sph)" stroke="#000" stroke-width="1"/><circle cx="40.3" cy="252" r="5.6" fill="url(#sph)" stroke="#000" stroke-width="1"/><path d="M35 252 H45.5 M40.3 247 V257 M42 245 H53 M47.5 239.5 V251" stroke="#203080" stroke-width="0.5"/><path d="M30 263 L25 263 L30 258 Z" fill="#6a6a6a"/><path d="M58 263 L53 263 L58 258 Z" fill="#6a6a6a"/><ellipse cx="16" cy="269.2" rx="5.5" ry="2" fill="none" stroke="#000" stroke-width="0.9"/><path d="M5.5 274.5 C11 277 21 277 26.5 274.5 V285 C21 288.5 11 288.5 5.5 285 Z" fill="#5a78f0" stroke="#000" stroke-width="1"/><ellipse cx="16" cy="282.5" rx="5" ry="2" fill="#8aa0ff" stroke="#fff" stroke-width="1.3"/><path d="M34 282 L43.5 267.5 C47 269 51 269.5 54.5 271 L45 286 C42 284 38 283 34 282 Z" fill="url(#lb)" stroke="#000" stroke-width="1"/><path d="M38.5 275 L49.5 278.5 M40 279 C43 275 46 272 49 268.7" fill="none" stroke="#203080" stroke-width="0.6"/><path d="M30 291 L25 291 L30 286 Z" fill="#6a6a6a"/><path d="M58 291 L53 291 L58 286 Z" fill="#6a6a6a"/><path d="M7 302 L9.5 299.5 L8.5 297.5 L11 296 L13 297.5 L15 295.5 L17 297.5 L16 300 L18.5 302 L17 304.5 L14 304 L12.5 306.5 L10 305 L9 303.5 Z" fill="#f8a800" stroke="#000" stroke-width="0.8"/><path d="M14 306 L16.5 303.5 L18.5 305 L21 304 L22 306.5 L24.5 308 L23 310.5 L25 313 L22.5 315.5 L20 313.5 L18 315 L16.5 312.5 L14 311.5 L15 309 Z" fill="#fff" stroke="#000" stroke-width="0.8"/><path d="M33.5 316 V300 L37.5 308 L51.5 296.5 L45 309 L55 311 L46.5 313.5 L48 316 Z" fill="url(#org)" stroke="#000" stroke-width="0.8"/><path d="M30 319 L25 319 L30 314 Z" fill="#6a6a6a"/><rect x="5.2" y="332.2" width="11" height="5" fill="#fff" stroke="#000" stroke-width="1"/><path d="M15 324 H22 L16 337 Z" fill="#102a90"/><path d="M16.5 338.5 L20.5 334 L25 338 L21 342.5 Z" fill="#fff" stroke="#000" stroke-width="1"/><rect x="34.2" y="334.3" width="18.5" height="5.3" fill="#fff" stroke="#000" stroke-width="1"/><path d="M44 326 H51 L44.5 339.5 Z" fill="#102a90"/><circle cx="16" cy="357.5" r="4.8" fill="#000"/><circle cx="12.2" cy="364" r="4.8" fill="#000"/><circle cx="20" cy="364" r="4.8" fill="#000"/><circle cx="16" cy="357.5" r="3.3" fill="#5a7cf0"/><circle cx="12.2" cy="364.5" r="3.3" fill="#fff"/><circle cx="20" cy="364.5" r="3.3" fill="#102a90"/><circle cx="44" cy="357" r="3.4" fill="#5a7cf0" stroke="#000" stroke-width="0.8"/><circle cx="38.8" cy="365" r="3.4" fill="#fff" stroke="#000" stroke-width="1"/><circle cx="49" cy="365" r="3.4" fill="#102a90" stroke="#000" stroke-width="0.8"/><path d="M30 375 L25 375 L30 370 Z" fill="#6a6a6a"/><path d="M5.5 384.5 C13 383 20 389 21 398.5" fill="none" stroke="#000" stroke-width="1.5"/><rect x="9.40" y="382.40" width="3.2" height="3.2" fill="#fff" stroke="#000" stroke-width="1"/><rect x="19.40" y="392.40" width="3.2" height="3.2" fill="#fff" stroke="#000" stroke-width="1"/><path d="M33.5 385 C42 383 50 390 49.5 400" fill="none" stroke="#000" stroke-width="2"/><path d="M33.5 380.5 H41 L52 391.5 V400" fill="none" stroke="#000" stroke-width="0.9" stroke-dasharray="1 1"/><rect x="39.40" y="378.40" width="3.2" height="3.2" fill="#fff" stroke="#000" stroke-width="1"/><rect x="51.40" y="390.40" width="3.2" height="3.2" fill="#fff" stroke="#000" stroke-width="1"/><path d="M58 403 L53 403 L58 398 Z" fill="#6a6a6a"/><path d="M7.5 408 L23.5 410.5 L22.5 416 L20.5 414 L17 413.5 L14.5 424 L18 426 L17 428 L9.5 426.5 L10.5 424.5 L12.5 424 L14 413 L10.5 412.5 L9 414.5 Z" fill="url(#lb2)" stroke="#000" stroke-width="1"/><rect x="35.3" y="420" width="6" height="5.5" fill="url(#wg)" stroke="#000" stroke-width="1"/><rect x="47.5" y="407.5" width="6.3" height="6" fill="url(#lb)" stroke="#000" stroke-width="1"/><path d="M41 419.5 L46.5 414.5" stroke="#000" stroke-width="0.9"/><path d="M44 414.5 L47 413.5 L46 416.5 Z" fill="#000"/><path d="M58 431 L53 431 L58 426 Z" fill="#6a6a6a"/><rect x="7.5" y="435.5" width="6" height="6" fill="url(#lb)" stroke="#000" stroke-width="1"/><rect x="19.8" y="438.5" width="5.5" height="5.5" fill="url(#lb)" stroke="#000" stroke-width="1"/><rect x="15.8" y="441.5" width="5.5" height="5.5" fill="url(#lb)" stroke="#000" stroke-width="1"/><rect x="7.5" y="447.5" width="6" height="6" fill="url(#wg)" stroke="#000" stroke-width="1"/><rect x="19.8" y="449.5" width="5.5" height="5.5" fill="url(#lb)" stroke="#000" stroke-width="1"/><rect x="33.3" y="435.5" width="5.3" height="14" fill="url(#wg)" stroke="#000" stroke-width="1"/><path d="M41.5 450.5 L50 440 L54.5 443.5 L46 454 Z" fill="#6a88f4" stroke="#000" stroke-width="1"/><path d="M38.5 437 C43 437 46 438 47.5 441" fill="none" stroke="#000" stroke-width="0.9"/><path d="M46 440.5 L48.3 442.5 L48.5 439 Z" fill="#000"/><path d="M7.5 467 L16 463.5 L24.5 467 V478 L16 482 L7.5 478 Z" fill="#5a78f0" stroke="#000" stroke-width="1"/><path d="M7.5 467 L16 463.5 L24.5 467 L16 470.5 Z" fill="#a8baff" stroke="#000" stroke-width="0.6"/><path d="M13 475 L19 473.5 V481 L13 482 Z" fill="#fff" stroke="#000" stroke-width="0.8"/><path d="M33.5 480.5 L38 476 H55 L50.5 480.5 Z" fill="#6a88f4" stroke="#000" stroke-width="1"/><path d="M38.5 477.5 V467 M44 477.5 V467 M49.5 477.5 V467" stroke="#9a9a9a" stroke-width="1.6"/><path d="M36.5 468 L38.5 465 L40.5 468 Z M42 468 L44 465 L46 468 Z M47.5 468 L49.5 465 L51.5 468 Z" fill="#9a9a9a"/><path d="M30 487 L25 487 L30 482 Z" fill="#6a6a6a"/><path d="M58 487 L53 487 L58 482 Z" fill="#6a6a6a"/><rect x="6.8" y="491.5" width="4.3" height="4.3" fill="#8aa2f8" stroke="#000" stroke-width="1.1"/><rect x="13.8" y="491.5" width="4.3" height="4.3" fill="#8aa2f8" stroke="#000" stroke-width="1.1"/><rect x="20.8" y="491.5" width="4.3" height="4.3" fill="#8aa2f8" stroke="#000" stroke-width="1.1"/><rect x="6.8" y="498.5" width="4.3" height="4.3" fill="#8aa2f8" stroke="#000" stroke-width="1.1"/><rect x="13.8" y="498.5" width="4.3" height="4.3" fill="#8aa2f8" stroke="#000" stroke-width="1.1"/><rect x="20.8" y="498.5" width="4.3" height="4.3" fill="#8aa2f8" stroke="#000" stroke-width="1.1"/><rect x="6.8" y="505.5" width="4.3" height="4.3" fill="#fff" stroke="#000" stroke-width="1.1"/><rect x="13.8" y="505.5" width="4.3" height="4.3" fill="#8aa2f8" stroke="#000" stroke-width="1.1"/><rect x="20.8" y="505.5" width="4.3" height="4.3" fill="#8aa2f8" stroke="#000" stroke-width="1.1"/><rect x="39.5" y="491.5" width="9" height="4.5" fill="#ddd" stroke="#000" stroke-width="1.1"/><rect x="41.5" y="498.5" width="5" height="4" fill="#ddd" stroke="#000" stroke-width="1.1"/><rect x="40.5" y="504.5" width="7" height="5.5" fill="#ddd" stroke="#000" stroke-width="1.1"/><path d="M44 490 V512" stroke="#d01010" stroke-width="1.2"/><path d="M30 515 L25 515 L30 510 Z" fill="#6a6a6a"/><path d="M58 515 L53 515 L58 510 Z" fill="#6a6a6a"/><path d="M7.5 522.5 L12.5 521 L15 523 V537 L11 539.5 L7.5 537.5 Z" fill="url(#wg)" stroke="#000" stroke-width="0.9"/><path d="M14 522 L18 520 L24 523 L17.5 540 L13 538 Z" fill="#5a78f0" stroke="#000" stroke-width="0.9"/><rect x="40.5" y="518.5" width="3" height="21.5" fill="#8aa2f8" stroke="#000" stroke-width="1"/><circle cx="34.3" cy="524.5" r="1.6" fill="#000"/><circle cx="48" cy="524.5" r="1.6" fill="#000"/><path d="M34.5 528 H41 L37 533 L40.5 538 M48 528 H43 L50.5 532 L51 535 L55 538.5" fill="none" stroke="#000" stroke-width="1.6"/><path d="M30 543 L25 543 L30 538 Z" fill="#6a6a6a"/><path d="M58 543 L53 543 L58 538 Z" fill="#6a6a6a"/><path d="M6.5 559 L9 557 L12.5 561 C16 556 20.5 551 25.5 547.5 L26 548 C21.5 552.5 17 558.5 12.5 566 Z" fill="#000"/><path d="M34.5 553 L40 549.5 L46.5 551.5 L45.5 561 L40 563.5 L34.5 561 Z" fill="#d0d0d0" stroke="#000" stroke-width="1"/><path d="M34.5 553 L40.5 555.5 L46.5 551.5 M40.5 555.5 V563.5" fill="none" stroke="#000" stroke-width="0.7"/><path d="M47 550.5 L54 563 C52 566 44 566 42.5 563 Z" fill="url(#wg)" stroke="#000" stroke-width="1"/><path d="M30 571 L25 571 L30 566 Z" fill="#6a6a6a"/><path d="M58 571 L53 571 L58 566 Z" fill="#6a6a6a"/><path d="M13.5 580 L17.5 574.5 H23 L24.5 576 V578.5 L21 580 L16 581.5 Z" fill="#fff" stroke="#000" stroke-width="0.9"/><rect x="25.2" y="574" width="1.8" height="5.8" fill="#000"/><path d="M15.5 582 L7.3 591.5 L17.5 595.5 L23.7 590 Z" fill="url(#gold)" stroke="#000" stroke-width="1"/><path d="M30 599 L25 599 L30 594 Z" fill="#6a6a6a"/></g></svg><div style="position:absolute;left:68px;top:58px;width:1645px;height:778px;background:#9ba1a8;border:1px solid #c5cde0;"></div><div style="position:absolute;left:69px;top:59px;width:47px;height:18px;background:#6aa2fb;border-radius:0 0 3px 0;"></div><div class="t" style="left:75.8px;top:62.05px;font-size:12.5px;letter-spacing:-0.31px;color:#222;font-weight:bold;">Top</div><div style="position:absolute;left:105px;top:61px;width:1.3px;height:15px;background:#222;"></div><svg style="position:absolute;left:107px;top:66px;" width="8" height="5" viewBox="0 0 8 5"><path d="M0 0 L7 0 L3.5 4 Z" fill="#333"/></svg><svg style="position:absolute;left:0px;top:0px;pointer-events:none;" width="1918" height="931" viewBox="0 0 1918 931"><path d="M777.68 77.32 C777.64 77.58 777.56 78.27 777.46 78.86 C777.37 79.46 777.23 80.23 777.11 80.91 C776.99 81.59 776.91 82.02 776.75 82.95 C776.59 83.89 776.25 85.85 776.13 86.53 C776.01 87.21 776.17 86.28 776.04 87.04 C775.90 87.81 775.48 90.19 775.32 91.13 C775.17 92.07 775.18 91.99 775.11 92.68 C775.04 93.38 775.01 94.12 774.92 95.30 C774.83 96.48 774.67 98.32 774.58 99.76 C774.48 101.20 774.42 102.55 774.34 103.95 C774.26 105.34 774.18 106.74 774.10 108.13 C774.02 109.53 773.92 111.27 773.86 112.32 C773.80 113.37 773.79 113.70 773.74 114.41 C773.70 115.13 773.66 115.45 773.60 116.62 C773.54 117.78 773.41 119.92 773.37 121.41 C773.34 122.90 773.41 124.18 773.37 125.55 C773.32 126.93 773.19 128.28 773.10 129.65 C773.01 131.02 772.91 132.64 772.84 133.75 C772.77 134.86 772.72 135.62 772.67 136.31 C772.63 136.99 772.63 136.90 772.57 137.84 C772.51 138.78 772.40 140.57 772.31 141.94 C772.22 143.30 772.13 144.65 772.04 146.03 C771.95 147.42 771.84 148.83 771.76 150.22 C771.68 151.62 771.60 153.55 771.56 154.43 C771.52 155.30 771.59 154.77 771.52 155.45 C771.45 156.12 771.28 157.29 771.13 158.47 C770.98 159.64 770.77 161.32 770.61 162.49 C770.46 163.67 770.31 164.84 770.23 165.52 C770.14 166.19 770.21 165.68 770.10 166.52 C769.99 167.36 769.76 169.21 769.58 170.55 C769.41 171.89 769.17 173.74 769.07 174.58 C768.96 175.42 769.02 174.91 768.94 175.58 C768.85 176.25 768.70 177.42 768.55 178.60 C768.40 179.79 768.21 181.36 768.04 182.71 C767.88 184.07 767.73 185.40 767.57 186.75 C767.41 188.09 767.24 189.60 767.10 190.77 C766.96 191.95 766.83 193.12 766.75 193.79 C766.67 194.46 766.73 193.96 766.63 194.80 C766.53 195.64 766.32 197.48 766.16 198.82 C766.00 200.17 765.85 201.51 765.69 202.85 C765.53 204.19 765.38 205.52 765.22 206.88 C765.06 208.23 764.84 210.09 764.74 210.95 C764.64 211.81 764.69 211.32 764.61 212.04 C764.54 212.75 764.42 214.02 764.32 215.22 C764.21 216.42 764.08 217.90 763.97 219.23 C763.85 220.57 763.73 221.91 763.62 223.24 C763.50 224.58 763.38 225.92 763.27 227.26 C763.15 228.59 762.98 230.52 762.92 231.27 C762.85 232.02 762.93 231.10 762.87 231.77 C762.81 232.44 762.68 234.03 762.57 235.28 C762.46 236.53 762.34 237.94 762.22 239.29 C762.10 240.65 761.95 242.03 761.86 243.41 C761.76 244.78 761.70 246.43 761.64 247.54 C761.58 248.65 761.55 249.38 761.51 250.04 C761.48 250.71 761.48 250.63 761.44 251.55 C761.39 252.47 761.30 254.22 761.24 255.55 C761.17 256.89 761.10 258.23 761.04 259.56 C760.97 260.90 760.90 262.23 760.84 263.57 C760.77 264.91 760.69 266.58 760.64 267.58 C760.59 268.58 760.57 268.91 760.54 269.58 C760.50 270.25 760.49 270.59 760.44 271.59 C760.39 272.58 760.30 274.24 760.23 275.57 C760.16 276.91 760.09 278.24 760.02 279.58 C759.94 280.92 759.87 282.34 759.80 283.59 C759.73 284.84 759.65 286.43 759.61 287.10 C759.57 287.76 759.63 286.85 759.58 287.60 C759.53 288.35 759.40 290.27 759.30 291.60 C759.19 292.93 759.06 294.26 758.94 295.60 C758.83 296.93 758.71 298.26 758.59 299.59 C758.47 300.93 758.32 302.59 758.23 303.61 C758.15 304.63 758.11 305.01 758.06 305.71 C758.02 306.41 758.01 306.78 757.96 307.80 C757.92 308.81 757.84 310.46 757.77 311.80 C757.71 313.13 757.65 314.46 757.58 315.80 C757.52 317.13 757.46 318.46 757.40 319.79 C757.33 321.13 757.24 322.96 757.21 323.79 C757.17 324.63 757.19 324.13 757.16 324.79 C757.13 325.46 757.07 326.63 757.02 327.79 C756.96 328.96 756.89 330.46 756.83 331.79 C756.76 333.13 756.68 334.88 756.64 335.80 C756.59 336.72 756.60 336.64 756.57 337.31 C756.54 337.98 756.51 338.74 756.47 339.82 C756.42 340.90 756.36 342.49 756.30 343.82 C756.24 345.15 756.17 346.82 756.13 347.82 C756.09 348.82 756.08 349.15 756.05 349.82 C756.02 350.48 755.99 350.82 755.94 351.82 C755.88 352.81 755.79 354.48 755.71 355.81 C755.64 357.14 755.54 358.81 755.49 359.81 C755.43 360.81 755.41 361.14 755.37 361.81 C755.34 362.47 755.32 362.81 755.26 363.81 C755.20 364.81 755.11 366.48 755.04 367.81 C754.96 369.14 754.88 370.71 754.81 371.81 C754.75 372.91 754.71 373.74 754.67 374.40 C754.63 375.07 754.64 374.90 754.59 375.80 C754.54 376.70 754.45 378.47 754.37 379.80 C754.30 381.13 754.22 382.63 754.15 383.80 C754.09 384.96 754.02 386.13 753.98 386.80 C753.95 387.46 753.98 386.96 753.93 387.79 C753.88 388.63 753.78 390.46 753.71 391.79 C753.63 393.13 753.55 394.54 753.49 395.81 C753.42 397.08 753.37 398.75 753.34 399.44 C753.31 400.12 753.35 399.19 753.32 399.94 C753.30 400.69 753.23 402.60 753.19 403.93 C753.15 405.27 753.10 406.60 753.06 407.93 C753.01 409.27 752.97 410.60 752.93 411.93 C752.88 413.27 752.84 414.60 752.77 415.93 C752.71 417.26 752.63 418.60 752.55 419.93 C752.48 421.26 752.41 422.57 752.33 423.93 C752.26 425.29 752.15 426.70 752.11 428.10 C752.07 429.50 752.10 430.95 752.09 432.33 C752.09 433.70 752.08 435.00 752.08 436.33 C752.07 437.67 752.07 439.01 752.07 440.34 C752.06 441.68 752.06 443.01 752.05 444.35 C752.05 445.68 752.04 447.52 752.04 448.36 C752.03 449.19 752.04 448.69 752.03 449.36 C752.03 450.03 752.03 451.19 752.02 452.36 C752.02 453.53 752.01 455.01 752.01 456.37 C752.01 457.73 752.02 459.58 752.02 460.53 C752.03 461.49 752.04 461.42 752.06 462.10 C752.07 462.78 752.09 463.53 752.11 464.61 C752.13 465.70 752.18 467.29 752.20 468.62 C752.21 469.96 752.22 471.64 752.22 472.64 C752.23 473.64 752.21 473.98 752.21 474.65 C752.20 475.32 752.20 475.65 752.19 476.66 C752.18 477.66 752.17 479.34 752.16 480.68 C752.15 482.02 752.14 483.61 752.13 484.70 C752.12 485.79 752.12 486.54 752.11 487.21 C752.11 487.89 752.10 487.80 752.10 488.75 C752.10 489.69 752.11 491.53 752.12 492.90 C752.13 494.26 752.14 495.75 752.15 496.92 C752.15 498.09 752.16 499.27 752.17 499.94 C752.17 500.61 752.17 500.10 752.17 500.94 C752.18 501.78 752.19 503.63 752.20 504.97 C752.21 506.31 752.22 507.82 752.23 508.99 C752.23 510.16 752.24 511.34 752.24 512.01 C752.25 512.68 752.25 512.18 752.25 513.01 C752.26 513.85 752.27 515.65 752.28 517.04 C752.29 518.42 752.28 519.88 752.33 521.33 C752.38 522.77 752.50 524.31 752.57 525.72 C752.65 527.12 752.72 528.41 752.79 529.76 C752.86 531.10 752.94 532.45 753.01 533.79 C753.08 535.14 753.18 536.99 753.23 537.83 C753.27 538.67 753.25 538.17 753.28 538.84 C753.32 539.51 753.35 540.70 753.44 541.87 C753.54 543.04 753.72 544.55 753.85 545.88 C753.99 547.22 754.17 549.06 754.26 549.90 C754.34 550.73 754.28 550.17 754.36 550.90 C754.44 551.63 754.57 552.99 754.73 554.26 C754.89 555.52 755.13 557.11 755.33 558.48 C755.52 559.85 755.70 561.16 755.88 562.50 C756.07 563.84 756.26 565.21 756.44 566.51 C756.63 567.82 756.88 569.66 756.97 570.33 C757.07 571.00 756.90 569.83 757.00 570.53 C757.10 571.23 757.38 573.21 757.56 574.55 C757.75 575.89 757.93 577.20 758.12 578.57 C758.31 579.93 758.48 581.29 758.71 582.73 C758.93 584.17 759.26 586.00 759.47 587.20 C759.68 588.40 759.84 589.24 759.95 589.91 C760.07 590.58 760.03 590.33 760.19 591.22 C760.35 592.11 760.67 593.90 760.91 595.24 C761.15 596.58 761.39 597.92 761.63 599.26 C761.87 600.60 762.09 601.95 762.34 603.29 C762.60 604.62 762.98 606.37 763.17 607.29 C763.36 608.20 763.34 608.12 763.48 608.79 C763.61 609.45 763.75 610.13 763.99 611.29 C764.23 612.44 764.56 614.24 764.91 615.73 C765.26 617.21 765.72 618.79 766.09 620.21 C766.47 621.62 766.81 622.87 767.16 624.21 C767.52 625.54 768.03 627.47 768.23 628.21 C768.43 628.94 768.16 627.94 768.34 628.61 C768.52 629.27 768.96 630.94 769.30 632.21 C769.64 633.47 770.01 634.87 770.37 636.21 C770.72 637.54 771.08 638.87 771.44 640.21 C771.79 641.54 772.17 642.96 772.50 644.21 C772.84 645.45 773.24 646.94 773.44 647.67 C773.64 648.39 773.46 647.73 773.71 648.56 C773.95 649.38 774.52 651.29 774.92 652.64 C775.32 653.99 775.71 655.31 776.11 656.64 C776.50 657.98 776.90 659.31 777.30 660.64 C777.69 661.98 778.19 663.64 778.49 664.64 C778.78 665.64 778.88 665.98 779.08 666.64 C779.28 667.31 779.37 667.65 779.67 668.64 C779.98 669.64 780.51 671.30 780.93 672.62 C781.35 673.95 781.68 675.08 782.20 676.60 C782.72 678.12 783.47 680.23 784.05 681.75 C784.63 683.28 785.35 684.92 785.69 685.75 C786.03 686.58 785.82 686.08 786.09 686.74 C786.36 687.40 786.84 688.56 787.31 689.72 C787.79 690.88 788.40 692.36 788.94 693.69 C789.49 695.01 790.03 696.33 790.57 697.65 C791.11 698.98 791.66 700.30 792.20 701.62 C792.74 702.94 793.49 704.76 793.83 705.59 C794.17 706.42 793.95 705.88 794.23 706.58 C794.52 707.28 795.00 708.53 795.54 709.77 C796.08 711.02 796.84 712.68 797.46 714.06 C798.08 715.43 798.66 716.70 799.26 718.02 C799.86 719.34 800.46 720.67 801.06 721.99 C801.66 723.31 802.26 724.63 802.87 725.95 C803.47 727.27 804.07 728.59 804.69 729.91 C805.31 731.22 805.96 732.52 806.60 733.83 C807.23 735.13 807.82 736.36 808.50 737.75 C809.18 739.14 810.03 740.90 810.68 742.16 C811.33 743.41 812.01 744.59 812.38 745.27 C812.75 745.95 812.47 745.43 812.91 746.25 C813.36 747.06 814.35 748.86 815.06 750.16 C815.78 751.46 816.49 752.77 817.21 754.07 C817.93 755.37 818.64 756.68 819.36 757.98 C820.07 759.29 820.97 760.92 821.51 761.89 C822.04 762.87 822.22 763.20 822.58 763.85 C822.94 764.50 823.13 764.82 823.65 765.81 C824.18 766.79 825.03 768.36 825.73 769.75 C826.43 771.15 827.16 772.75 827.86 774.17 C828.57 775.60 829.39 777.16 829.96 778.29 C830.53 779.41 830.96 780.25 831.30 780.92 C831.64 781.60 831.56 781.43 832.02 782.34 C832.49 783.25 833.44 785.13 834.09 786.39 C834.73 787.66 835.55 789.26 835.89 789.94 C836.23 790.61 835.76 789.68 836.15 790.44 C836.54 791.20 837.52 793.14 838.21 794.49 C838.90 795.84 839.85 797.70 840.28 798.55 C840.70 799.39 840.45 798.88 840.79 799.56 C841.13 800.23 841.88 801.72 842.34 802.60 C842.80 803.47 843.36 804.50 843.57 804.79 C843.78 805.08 843.58 804.42 843.58 804.35" fill="none" stroke="#f4f4f4" stroke-width="1.3"/><path d="M798.00 80.00 L777.68 77.32 M796.42 86.00 L777.11 80.91 M794.97 91.50 L776.13 86.53 M793.39 97.50 L775.11 92.68 M790.72 108.00 L774.34 103.95 M788.24 118.00 L773.74 114.41 M786.14 128.00 L773.37 125.55 M784.12 138.50 L772.67 136.31 M782.30 148.00 L772.04 146.03 M780.69 157.00 L771.52 155.45 M778.99 167.00 L770.23 165.52 M777.30 177.00 L768.94 175.58 M774.39 195.00 L766.75 193.79 M771.55 213.00 L764.61 212.04 M769.33 232.50 L762.87 231.77 M767.52 250.50 L761.51 250.04 M766.04 270.00 L760.54 269.58 M764.66 287.50 L759.61 287.10 M763.19 306.00 L758.06 305.71 M762.45 325.00 L757.16 324.79 M761.96 337.50 L756.57 337.31 M761.55 350.00 L756.05 349.82 M761.15 362.00 L755.37 361.81 M760.74 374.60 L754.67 374.40 M760.34 387.00 L753.98 386.80 M759.98 399.50 L753.34 399.44 M759.86 412.00 L752.93 411.93 M759.74 424.00 L752.33 423.93 M760.03 436.00 L752.08 436.33 M760.57 449.00 L752.03 449.36 M761.15 461.50 L752.06 462.10 M761.98 474.00 L752.21 474.65 M762.81 486.50 L752.11 487.21 M763.78 499.00 L752.17 499.94 M764.75 511.00 L752.24 512.01 M765.97 524.00 L752.57 525.72 M767.64 537.00 L753.28 538.84 M769.18 549.00 L754.36 550.90 M772.21 567.80 L756.97 570.33 M775.57 586.70 L759.95 589.91 M779.44 605.50 L763.48 608.79 M784.09 624.40 L768.34 628.61 M789.12 643.20 L773.44 647.67 M794.70 662.00 L779.08 666.64 M800.96 681.00 L786.09 686.74 M808.69 701.00 L794.23 706.58 M816.71 720.00 L802.87 725.95 M825.12 739.00 L812.38 745.27 M834.47 758.00 L822.58 763.85 M843.02 774.60 L831.30 780.92 M847.82 783.50 L835.89 789.94 M852.95 793.00 L840.79 799.56 M857.10 800.70 L843.58 804.35 " fill="none" stroke="#f4f4f4" stroke-width="1.3"/><path d="M858.30 140.00 C857.72 146.00 855.88 151.00 854.80 176.00 C853.72 201.00 852.30 251.00 851.80 290.00 C851.30 329.00 851.72 379.17 851.80 410.00 C851.88 440.83 851.92 453.33 852.30 475.00 C852.68 496.67 853.47 508.33 854.10 540.00 C854.73 571.67 855.60 623.33 856.10 665.00 C856.60 706.67 856.90 767.50 857.10 790.00 C857.30 812.50 857.27 798.33 857.30 800.00" fill="none" stroke="#f00" stroke-width="1.2"/><path d="M792.2 102.5 H836 M777.4 176.5 H853.2 M768.5 251.5 H850.4 M762.5 325.5 H848.3 M761 399.5 H847 M762 473.5 H847.5 M768.5 547.5 H848.5 M783.5 622.5 H851 M806.9 696.5 H852 M840.4 770.5 H852 " fill="none" stroke="#f00" stroke-width="1.2"/><path d="M857.5 77.5 V84" stroke="#f00" stroke-width="1.3"/><path d="M787.4 121.5 H855 M781.5 152.5 H855 M776.4 182.5 H853.6 M771.5 213.5 H852.2 M768 244.5 H851.1 M763.2 305.5 H849.4 M762 336.5 H848 M761 366.5 H848 M760 397.5 H847.5 M759.7 428.5 H847.5 M761 459.5 H847.5 M763 489.5 H848 M765.5 520.5 H848 M774.4 581.5 H850.3 M780.8 612.5 H851.3 M789 642.5 H852.5 M798.3 674.5 H852.5 M810 704.5 H852.5 M823.2 735.5 H852.5 M838.7 766.5 H852.5 " fill="none" stroke="#000" stroke-width="1.2"/><path d="M765.7 274.5 H850" stroke="#0f0" stroke-width="1.2"/><path d="M769.5 551.5 H849.5" stroke="#b040ff" stroke-width="1.2"/><path d="M797.80 80.00 C796.83 83.67 793.77 95.10 792.00 102.00 C790.23 108.90 788.98 113.03 787.20 121.40 C785.42 129.77 783.13 142.05 781.30 152.20 C779.47 162.35 777.87 172.12 776.20 182.30 C774.53 192.48 772.70 202.98 771.30 213.30 C769.90 223.62 768.77 234.00 767.80 244.20 C766.83 254.40 766.30 264.25 765.50 274.50 C764.70 284.75 763.62 295.38 763.00 305.70 C762.38 316.02 762.17 326.28 761.80 336.40 C761.43 346.52 761.13 356.23 760.80 366.40 C760.47 376.57 760.02 387.10 759.80 397.40 C759.58 407.70 759.33 417.90 759.50 428.20 C759.67 438.50 760.25 449.02 760.80 459.20 C761.35 469.38 762.05 479.12 762.80 489.30 C763.55 499.48 764.22 509.93 765.30 520.30 C766.38 530.67 767.82 541.38 769.30 551.50 C770.78 561.62 772.32 570.90 774.20 581.00 C776.08 591.10 778.17 601.80 780.60 612.10 C783.03 622.40 785.88 632.47 788.80 642.80 C791.72 653.13 794.60 663.83 798.10 674.10 C801.60 684.37 805.65 694.23 809.80 704.40 C813.95 714.57 818.22 724.73 823.00 735.10 C827.78 745.47 832.85 755.67 838.50 766.60 C844.15 777.53 853.83 795.02 856.90 800.70" fill="none" stroke="#e00" stroke-width="1.2"/><path d="M798.20 80.00 C797.23 83.67 794.17 95.10 792.40 102.00 C790.63 108.90 789.38 113.03 787.60 121.40 C785.82 129.77 783.53 142.05 781.70 152.20 C779.87 162.35 778.27 172.12 776.60 182.30 C774.93 192.48 773.10 202.98 771.70 213.30 C770.30 223.62 769.17 234.00 768.20 244.20 C767.23 254.40 766.70 264.25 765.90 274.50 C765.10 284.75 764.02 295.38 763.40 305.70 C762.78 316.02 762.57 326.28 762.20 336.40 C761.83 346.52 761.53 356.23 761.20 366.40 C760.87 376.57 760.42 387.10 760.20 397.40 C759.98 407.70 759.73 417.90 759.90 428.20 C760.07 438.50 760.65 449.02 761.20 459.20 C761.75 469.38 762.45 479.12 763.20 489.30 C763.95 499.48 764.62 509.93 765.70 520.30 C766.78 530.67 768.22 541.38 769.70 551.50 C771.18 561.62 772.72 570.90 774.60 581.00 C776.48 591.10 778.57 601.80 781.00 612.10 C783.43 622.40 786.28 632.47 789.20 642.80 C792.12 653.13 795.00 663.83 798.50 674.10 C802.00 684.37 806.05 694.23 810.20 704.40 C814.35 714.57 818.62 724.73 823.40 735.10 C828.18 745.47 833.25 755.67 838.90 766.60 C844.55 777.53 854.23 795.02 857.30 800.70" fill="none" stroke="#000" stroke-width="1.2" stroke-dasharray="2.6 1"/><path d="M855.00 152.50 C854.77 157.50 854.07 172.37 853.60 182.50 C853.13 192.63 852.62 203.02 852.20 213.30 C851.78 223.58 851.47 234.00 851.10 244.20 C850.73 254.40 850.28 264.25 850.00 274.50 C849.72 284.75 849.73 295.38 849.40 305.70 C849.07 316.02 848.23 326.28 848.00 336.40 C847.77 346.52 848.08 356.23 848.00 366.40 C847.92 376.57 847.58 387.10 847.50 397.40 C847.42 407.70 847.50 417.90 847.50 428.20 C847.50 438.50 847.42 449.02 847.50 459.20 C847.58 469.38 847.92 479.12 848.00 489.30 C848.08 499.48 847.75 510.10 848.00 520.30 C848.25 530.50 849.12 540.38 849.50 550.50 C849.88 560.62 850.00 570.73 850.30 581.00 C850.60 591.27 850.93 601.80 851.30 612.10 C851.67 622.40 852.30 632.57 852.50 642.80 C852.70 653.03 852.50 663.23 852.50 673.50 C852.50 683.77 852.50 694.13 852.50 704.40 C852.50 714.67 852.50 724.97 852.50 735.10 C852.50 745.23 852.50 760.18 852.50 765.20" fill="none" stroke="#000" stroke-width="1.3"/><path d="M852.5 765.2 L851 790 L857.1 800.7" fill="none" stroke="#000" stroke-width="1.2"/><path d="M855 109 V152.5 M858 114 V128" fill="none" stroke="#000" stroke-width="1.2"/><path d="M854.5 110 C849 118 848 128 850.5 134 C852 138 855 140 856 140" fill="none" stroke="#000" stroke-width="1"/><path d="M798 79.5 C812 78.5 825 78.8 835 78.2 C843 77.3 850 77.7 857 77.7" fill="none" stroke="#000" stroke-width="1.2"/><path d="M797 84 C798 90 803 92.5 809 94.5 C818 97.8 830 100.6 841 104 C847 105.8 852 107.5 855 109.5" fill="none" stroke="#000" stroke-width="1.9" stroke-dasharray="3 0.7"/><circle cx="798" cy="79.5" r="3.1" fill="#fff" stroke="#000" stroke-width="1.1"/><circle cx="856" cy="139.5" r="3.1" fill="#fff" stroke="#000" stroke-width="1.1"/><path d="M852.5 139.5 H856 V143.1" fill="none" stroke="#000" stroke-width="1.1"/><circle cx="855" cy="152.5" r="3.1" fill="#fff" stroke="#000" stroke-width="1.1"/><path d="M851.5 152.5 H855 V156.1" fill="none" stroke="#000" stroke-width="1.1"/><circle cx="853.6" cy="182.5" r="3.1" fill="#fff" stroke="#000" stroke-width="1.1"/><path d="M850.1 182.5 H853.6 V186.1" fill="none" stroke="#000" stroke-width="1.1"/><circle cx="852.2" cy="213.3" r="3.1" fill="#fff" stroke="#000" stroke-width="1.1"/><path d="M848.7 213.3 H852.2 V216.9" fill="none" stroke="#000" stroke-width="1.1"/><circle cx="851.1" cy="244.2" r="3.1" fill="#fff" stroke="#000" stroke-width="1.1"/><path d="M847.6 244.2 H851.1 V247.79999999999998" fill="none" stroke="#000" stroke-width="1.1"/><circle cx="850" cy="274.5" r="3.1" fill="#fff" stroke="#000" stroke-width="1.1"/><path d="M846.5 274.5 H850 V278.1" fill="none" stroke="#000" stroke-width="1.1"/><circle cx="849.4" cy="305.7" r="3.1" fill="#fff" stroke="#000" stroke-width="1.1"/><path d="M845.9 305.7 H849.4 V309.3" fill="none" stroke="#000" stroke-width="1.1"/><circle cx="848" cy="336.4" r="3.1" fill="#fff" stroke="#000" stroke-width="1.1"/><path d="M844.5 336.4 H848 V340.0" fill="none" stroke="#000" stroke-width="1.1"/><circle cx="848" cy="366.4" r="3.1" fill="#fff" stroke="#000" stroke-width="1.1"/><path d="M844.5 366.4 H848 V370.0" fill="none" stroke="#000" stroke-width="1.1"/><circle cx="847.5" cy="397.4" r="3.1" fill="#fff" stroke="#000" stroke-width="1.1"/><path d="M844.0 397.4 H847.5 V401.0" fill="none" stroke="#000" stroke-width="1.1"/><circle cx="847.5" cy="428.2" r="3.1" fill="#fff" stroke="#000" stroke-width="1.1"/><path d="M844.0 428.2 H847.5 V431.8" fill="none" stroke="#000" stroke-width="1.1"/><circle cx="847.5" cy="459.2" r="3.1" fill="#fff" stroke="#000" stroke-width="1.1"/><path d="M844.0 459.2 H847.5 V462.8" fill="none" stroke="#000" stroke-width="1.1"/><circle cx="848" cy="489.3" r="3.1" fill="#fff" stroke="#000" stroke-width="1.1"/><path d="M844.5 489.3 H848 V492.90000000000003" fill="none" stroke="#000" stroke-width="1.1"/><circle cx="848" cy="520.3" r="3.1" fill="#fff" stroke="#000" stroke-width="1.1"/><path d="M844.5 520.3 H848 V523.9" fill="none" stroke="#000" stroke-width="1.1"/><circle cx="849.5" cy="550.5" r="3.1" fill="#fff" stroke="#000" stroke-width="1.1"/><path d="M846.0 550.5 H849.5 V554.1" fill="none" stroke="#000" stroke-width="1.1"/><circle cx="850.3" cy="581" r="3.1" fill="#fff" stroke="#000" stroke-width="1.1"/><path d="M846.8 581 H850.3 V584.6" fill="none" stroke="#000" stroke-width="1.1"/><circle cx="851.3" cy="612.1" r="3.1" fill="#fff" stroke="#000" stroke-width="1.1"/><path d="M847.8 612.1 H851.3 V615.7" fill="none" stroke="#000" stroke-width="1.1"/><circle cx="852.5" cy="642.8" r="3.1" fill="#fff" stroke="#000" stroke-width="1.1"/><path d="M849.0 642.8 H852.5 V646.4" fill="none" stroke="#000" stroke-width="1.1"/><circle cx="852.5" cy="673.5" r="3.1" fill="#fff" stroke="#000" stroke-width="1.1"/><path d="M849.0 673.5 H852.5 V677.1" fill="none" stroke="#000" stroke-width="1.1"/><circle cx="852.5" cy="704.4" r="3.1" fill="#fff" stroke="#000" stroke-width="1.1"/><path d="M849.0 704.4 H852.5 V708.0" fill="none" stroke="#000" stroke-width="1.1"/><circle cx="852.5" cy="735.1" r="3.1" fill="#fff" stroke="#000" stroke-width="1.1"/><path d="M849.0 735.1 H852.5 V738.7" fill="none" stroke="#000" stroke-width="1.1"/><circle cx="852.5" cy="765.2" r="3.1" fill="#fff" stroke="#000" stroke-width="1.1"/><path d="M849.0 765.2 H852.5 V768.8000000000001" fill="none" stroke="#000" stroke-width="1.1"/><circle cx="857.1" cy="800.7" r="3.1" fill="#fff" stroke="#000" stroke-width="1.1"/></svg><svg style="position:absolute;left:100px;top:760px;" width="50" height="45" viewBox="0 0 50 45"><path d="M5.5 11 V41.5 H35" fill="none" stroke="#555a5f" stroke-width="1.3"/><path d="M8 3.2 L11 9 M14.2 3 L10.2 12.7" stroke="#555a5f" stroke-width="1.2" fill="none"/><path d="M37.8 34.3 L44 41.7 M44 34.3 L37.8 41.7" stroke="#555a5f" stroke-width="1.2" fill="none"/></svg><div style="position:absolute;left:147px;top:839px;width:34px;height:19px;background:#e9eaee;border-radius:4px 4px 0 0;"></div><div class="t" style="left:78.5px;top:842.80px;font-size:12.2px;letter-spacing:-0.30px;color:#5b5b5b;">Perspective</div><div class="t" style="left:152.5px;top:842.80px;font-size:12.2px;letter-spacing:-0.30px;color:#1f1f1f;">Top</div><div class="t" style="left:188px;top:842.80px;font-size:12.2px;letter-spacing:-0.30px;color:#5b5b5b;">Front</div><div class="t" style="left:231px;top:842.80px;font-size:12.2px;letter-spacing:-0.30px;color:#5b5b5b;">Right</div><svg style="position:absolute;left:273px;top:843px;" width="11" height="11" viewBox="0 0 11 11"><path d="M4 1.5 H7 V4 H9.5 V7 H7 V9.5 H4 V7 H1.5 V4 H4 Z" fill="#fff" stroke="#666" stroke-width="1.1"/></svg><div style="position:absolute;left:1718px;top:57px;width:200px;height:19px;background:#e9eaee;border-radius:5px 5px 0 0;"></div><div style="position:absolute;left:1718px;top:75px;width:180px;height:1px;background:#dcdde1;"></div><div style="position:absolute;left:1718px;top:76px;width:180px;height:782px;background:#e9eaee;"></div><div class="t" style="left:1723px;top:59.70px;font-size:12.2px;letter-spacing:-0.30px;color:#5b5b5b;">Properties: Viewport</div><div style="position:absolute;left:2px;top:879px;width:1916px;height:32px;background:#e9eaee;"></div><div style="position:absolute;left:2px;top:860px;width:18px;height:51px;background:#e9eaee;border-radius:6px 0 0 6px;"></div><div style="position:absolute;left:20px;top:860px;width:55px;height:19px;background:#e9eaee;border-radius:0 6px 0 0;"></div><div style="position:absolute;left:20px;top:860px;width:1px;height:51px;background:#dcdde1;"></div><div class="t" style="left:32px;top:864.60px;font-size:12.2px;letter-spacing:-0.30px;color:#1f1f1f;">Osnap</div><div class="t" style="left:86px;top:864.60px;font-size:12.2px;letter-spacing:-0.30px;color:#5b5b5b;">Selection Filters</div><div style="position:absolute;left:1898px;top:76px;width:20px;height:782px;background:#e9eaee;"></div><div style="position:absolute;left:1898px;top:76px;width:20px;height:35px;background:#d9dade;border-radius:0 0 0 6px;"></div><div style="position:absolute;left:1898px;top:148px;width:20px;height:710px;background:#d9dade;border-radius:6px 0 0 0;"></div><svg style="position:absolute;left:1901px;top:4px;" width="14" height="14" viewBox="0 0 14 14"><g transform="translate(7 7)" fill="#c4c6cb"><rect x="-1.3" y="-6.2" width="2.6" height="3" transform="rotate(0)"/><rect x="-1.3" y="-6.2" width="2.6" height="3" transform="rotate(45)"/><rect x="-1.3" y="-6.2" width="2.6" height="3" transform="rotate(90)"/><rect x="-1.3" y="-6.2" width="2.6" height="3" transform="rotate(135)"/><rect x="-1.3" y="-6.2" width="2.6" height="3" transform="rotate(180)"/><rect x="-1.3" y="-6.2" width="2.6" height="3" transform="rotate(225)"/><rect x="-1.3" y="-6.2" width="2.6" height="3" transform="rotate(270)"/><rect x="-1.3" y="-6.2" width="2.6" height="3" transform="rotate(315)"/><circle r="4.4"/><circle r="1.8" fill="#e9eaee"/></g></svg><svg style="position:absolute;left:1901px;top:59px;" width="14" height="14" viewBox="0 0 14 14"><g transform="translate(7 7)" fill="#c4c6cb"><rect x="-1.3" y="-6.2" width="2.6" height="3" transform="rotate(0)"/><rect x="-1.3" y="-6.2" width="2.6" height="3" transform="rotate(45)"/><rect x="-1.3" y="-6.2" width="2.6" height="3" transform="rotate(90)"/><rect x="-1.3" y="-6.2" width="2.6" height="3" transform="rotate(135)"/><rect x="-1.3" y="-6.2" width="2.6" height="3" transform="rotate(180)"/><rect x="-1.3" y="-6.2" width="2.6" height="3" transform="rotate(225)"/><rect x="-1.3" y="-6.2" width="2.6" height="3" transform="rotate(270)"/><rect x="-1.3" y="-6.2" width="2.6" height="3" transform="rotate(315)"/><circle r="4.4"/><circle r="1.8" fill="#e9eaee"/></g></svg><svg style="position:absolute;left:1901px;top:862px;" width="14" height="14" viewBox="0 0 14 14"><g transform="translate(7 7)" fill="#c4c6cb"><rect x="-1.3" y="-6.2" width="2.6" height="3" transform="rotate(0)"/><rect x="-1.3" y="-6.2" width="2.6" height="3" transform="rotate(45)"/><rect x="-1.3" y="-6.2" width="2.6" height="3" transform="rotate(90)"/><rect x="-1.3" y="-6.2" width="2.6" height="3" transform="rotate(135)"/><rect x="-1.3" y="-6.2" width="2.6" height="3" transform="rotate(180)"/><rect x="-1.3" y="-6.2" width="2.6" height="3" transform="rotate(225)"/><rect x="-1.3" y="-6.2" width="2.6" height="3" transform="rotate(270)"/><rect x="-1.3" y="-6.2" width="2.6" height="3" transform="rotate(315)"/><circle r="4.4"/><circle r="1.8" fill="#e9eaee"/></g></svg><div style="position:absolute;left:1724px;top:80px;width:28px;height:28px;background:#ccd5ea;"></div><div class="t" style="left:1722.3px;top:126.34px;font-size:13px;letter-spacing:-0.32px;color:#222;">Viewport</div><div style="position:absolute;left:1722px;top:143.7px;width:168px;height:1px;background:#d9dce6;"></div><div class="t" style="left:1738.5px;top:148.70px;font-size:12.2px;letter-spacing:-0.3px;color:#222;width:72px;overflow:hidden;">Title</div><div style="position:absolute;left:1816px;top:145px;width:74px;height:19px;background:#fff;"></div><div class="t" style="left:1820px;top:148.70px;font-size:12.2px;letter-spacing:-0.30px;color:#222;">Top</div><div style="position:absolute;left:1738px;top:165px;width:152px;height:1px;background:#d9dce6;"></div><div class="t" style="left:1738.5px;top:169.60px;font-size:12.2px;letter-spacing:-0.3px;color:#222;width:72px;overflow:hidden;">Width</div><div style="position:absolute;left:1816px;top:167px;width:74px;height:17px;background:#fff;"></div><div class="t" style="left:1820px;top:169.60px;font-size:12.2px;letter-spacing:-0.30px;color:#222;">1645</div><div style="position:absolute;left:1878px;top:167px;width:1px;height:17px;background:#c9cfdd;"></div><div style="position:absolute;left:1879px;top:175px;width:11px;height:1px;background:#dde2ec;"></div><svg style="position:absolute;left:1880px;top:168px;" width="9" height="16" viewBox="0 0 9 16"><path d="M1 6.0 L4.5 2.5 L8 6.0 Z M1 10.5 L4.5 14.0 L8 10.5 Z" fill="#222"/></svg><div style="position:absolute;left:1738px;top:185px;width:152px;height:1px;background:#d9dce6;"></div><div class="t" style="left:1738.5px;top:189.80px;font-size:12.2px;letter-spacing:-0.3px;color:#222;width:72px;overflow:hidden;">Height</div><div style="position:absolute;left:1816px;top:187px;width:74px;height:17px;background:#fff;"></div><div class="t" style="left:1820px;top:189.80px;font-size:12.2px;letter-spacing:-0.30px;color:#222;">778</div><div style="position:absolute;left:1878px;top:187px;width:1px;height:17px;background:#c9cfdd;"></div><div style="position:absolute;left:1879px;top:195px;width:11px;height:1px;background:#dde2ec;"></div><svg style="position:absolute;left:1880px;top:188px;" width="9" height="16" viewBox="0 0 9 16"><path d="M1 6.0 L4.5 2.5 L8 6.0 Z M1 10.5 L4.5 14.0 L8 10.5 Z" fill="#222"/></svg><div style="position:absolute;left:1738px;top:205px;width:152px;height:1px;background:#d9dce6;"></div><div class="t" style="left:1738.5px;top:210.70px;font-size:12.2px;letter-spacing:-0.3px;color:#222;width:72px;overflow:hidden;">Projection</div><div style="position:absolute;left:1816px;top:207px;width:74px;height:19px;background:#fff;"></div><div class="t" style="left:1820px;top:210.70px;font-size:12.2px;letter-spacing:-0.30px;color:#222;">Parallel</div><svg style="position:absolute;left:1877px;top:207px;" width="10" height="19" viewBox="0 0 10 19"><path d="M1.5 8.0 L4.5 11.0 L7.5 8.0" fill="none" stroke="#333" stroke-width="1.2"/></svg><div style="position:absolute;left:1738px;top:227px;width:152px;height:1px;background:#d9dce6;"></div><div style="position:absolute;left:1816px;top:229px;width:74px;height:19px;background:#fff;"></div><div class="t" style="left:1738.5px;top:232.50px;font-size:12.2px;letter-spacing:-0.3px;color:#222;width:72px;overflow:hidden;">Display mode</div><div class="t" style="left:1820px;top:232.50px;font-size:12.2px;letter-spacing:-0.3px;color:#222;width:54px;overflow:hidden;">Wireframe</div><svg style="position:absolute;left:1877px;top:229px;" width="10" height="19" viewBox="0 0 10 19"><path d="M1.5 8 L4.5 11 L7.5 8" fill="none" stroke="#333" stroke-width="1.2"/></svg><div style="position:absolute;left:1738px;top:249px;width:152px;height:1px;background:#d9dce6;"></div><div class="t" style="left:1738.5px;top:253.50px;font-size:12.2px;letter-spacing:-0.3px;color:#222;width:72px;overflow:hidden;">Locked</div><div style="position:absolute;left:1817px;top:253px;width:12px;height:12px;background:#fff;border:1px solid #b9c0d4;"></div><div style="position:absolute;left:1738px;top:270px;width:152px;height:1px;background:#d9dce6;"></div><div class="t" style="left:1722.3px;top:275.34px;font-size:13px;letter-spacing:-0.32px;color:#222;">Camera</div><div style="position:absolute;left:1722px;top:292.7px;width:168px;height:1px;background:#d9dce6;"></div><div class="t" style="left:1738.5px;top:297.00px;font-size:12.2px;letter-spacing:-0.3px;color:#222;width:72px;overflow:hidden;">Lens Length (in mm)</div><div style="position:absolute;left:1816px;top:294px;width:74px;height:17px;background:#fff;"></div><div class="t" style="left:1820px;top:297.00px;font-size:12.2px;letter-spacing:-0.30px;color:#9a9a9a;">20548.074</div><div style="position:absolute;left:1878px;top:294px;width:1px;height:17px;background:#c9cfdd;"></div><div style="position:absolute;left:1879px;top:302px;width:11px;height:1px;background:#dde2ec;"></div><svg style="position:absolute;left:1880px;top:295px;" width="9" height="16" viewBox="0 0 9 16"><path d="M1 6.0 L4.5 2.5 L8 6.0 Z M1 10.5 L4.5 14.0 L8 10.5 Z" fill="#b5b5b5"/></svg><div style="position:absolute;left:1738px;top:312px;width:152px;height:1px;background:#d9dce6;"></div><div class="t" style="left:1738.5px;top:317.00px;font-size:12.2px;letter-spacing:-0.3px;color:#222;width:72px;overflow:hidden;">Rotation</div><div style="position:absolute;left:1816px;top:314px;width:74px;height:17px;background:#fff;"></div><div class="t" style="left:1820px;top:317.00px;font-size:12.2px;letter-spacing:-0.30px;color:#222;">0.0</div><div style="position:absolute;left:1878px;top:314px;width:1px;height:17px;background:#c9cfdd;"></div><div style="position:absolute;left:1879px;top:322px;width:11px;height:1px;background:#dde2ec;"></div><svg style="position:absolute;left:1880px;top:315px;" width="9" height="16" viewBox="0 0 9 16"><path d="M1 6.0 L4.5 2.5 L8 6.0 Z M1 10.5 L4.5 14.0 L8 10.5 Z" fill="#222"/></svg><div style="position:absolute;left:1738px;top:332px;width:152px;height:1px;background:#d9dce6;"></div><div class="t" style="left:1738.5px;top:337.00px;font-size:12.2px;letter-spacing:-0.3px;color:#222;width:72px;overflow:hidden;">X Location</div><div style="position:absolute;left:1816px;top:334px;width:74px;height:17px;background:#fff;"></div><div class="t" style="left:1820px;top:337.00px;font-size:12.2px;letter-spacing:-0.30px;color:#222;">10.462</div><div style="position:absolute;left:1878px;top:334px;width:1px;height:17px;background:#c9cfdd;"></div><div style="position:absolute;left:1879px;top:342px;width:11px;height:1px;background:#dde2ec;"></div><svg style="position:absolute;left:1880px;top:335px;" width="9" height="16" viewBox="0 0 9 16"><path d="M1 6.0 L4.5 2.5 L8 6.0 Z M1 10.5 L4.5 14.0 L8 10.5 Z" fill="#222"/></svg><div style="position:absolute;left:1738px;top:352px;width:152px;height:1px;background:#d9dce6;"></div><div class="t" style="left:1738.5px;top:357.00px;font-size:12.2px;letter-spacing:-0.3px;color:#222;width:72px;overflow:hidden;">Y Location</div><div style="position:absolute;left:1816px;top:354px;width:74px;height:17px;background:#fff;"></div><div class="t" style="left:1820px;top:357.00px;font-size:12.2px;letter-spacing:-0.30px;color:#222;">229.757</div><div style="position:absolute;left:1878px;top:354px;width:1px;height:17px;background:#c9cfdd;"></div><div style="position:absolute;left:1879px;top:362px;width:11px;height:1px;background:#dde2ec;"></div><svg style="position:absolute;left:1880px;top:355px;" width="9" height="16" viewBox="0 0 9 16"><path d="M1 6.0 L4.5 2.5 L8 6.0 Z M1 10.5 L4.5 14.0 L8 10.5 Z" fill="#222"/></svg><div style="position:absolute;left:1738px;top:372px;width:152px;height:1px;background:#d9dce6;"></div><div class="t" style="left:1738.5px;top:377.00px;font-size:12.2px;letter-spacing:-0.3px;color:#222;width:72px;overflow:hidden;">Z Location</div><div style="position:absolute;left:1816px;top:374px;width:74px;height:17px;background:#fff;"></div><div class="t" style="left:1820px;top:377.00px;font-size:12.2px;letter-spacing:-0.30px;color:#222;">43387.229</div><div style="position:absolute;left:1878px;top:374px;width:1px;height:17px;background:#c9cfdd;"></div><div style="position:absolute;left:1879px;top:382px;width:11px;height:1px;background:#dde2ec;"></div><svg style="position:absolute;left:1880px;top:375px;" width="9" height="16" viewBox="0 0 9 16"><path d="M1 6.0 L4.5 2.5 L8 6.0 Z M1 10.5 L4.5 14.0 L8 10.5 Z" fill="#222"/></svg><div style="position:absolute;left:1738px;top:392px;width:152px;height:1px;background:#d9dce6;"></div><div class="t" style="left:1738.5px;top:397.00px;font-size:12.2px;letter-spacing:-0.3px;color:#222;width:72px;overflow:hidden;">Distance to Target</div><div style="position:absolute;left:1816px;top:394px;width:74px;height:17px;background:#fff;"></div><div class="t" style="left:1820px;top:397.00px;font-size:12.2px;letter-spacing:-0.30px;color:#222;">43387.229</div><div style="position:absolute;left:1738px;top:412px;width:152px;height:1px;background:#d9dce6;"></div><div class="t" style="left:1738.5px;top:420.00px;font-size:12.2px;letter-spacing:-0.3px;color:#222;width:72px;overflow:hidden;">Location</div><div style="position:absolute;left:1816px;top:414px;width:72px;height:21px;background:#e9eaee;border:1px solid #b7bfd2;"></div><div class="t" style="left:1833px;top:420.00px;font-size:12.2px;letter-spacing:-0.30px;color:#222;">Place...</div><div style="position:absolute;left:1738px;top:438px;width:152px;height:1px;background:#d9dce6;"></div><div class="t" style="left:1722.3px;top:444.34px;font-size:13px;letter-spacing:-0.32px;color:#222;">Target</div><div style="position:absolute;left:1722px;top:461.2px;width:168px;height:1px;background:#d9dce6;"></div><div class="t" style="left:1738.5px;top:466.00px;font-size:12.2px;letter-spacing:-0.3px;color:#222;width:72px;overflow:hidden;">X Target</div><div style="position:absolute;left:1816px;top:463px;width:74px;height:17px;background:#fff;"></div><div class="t" style="left:1820px;top:466.00px;font-size:12.2px;letter-spacing:-0.30px;color:#222;">10.462</div><div style="position:absolute;left:1878px;top:463px;width:1px;height:17px;background:#c9cfdd;"></div><div style="position:absolute;left:1879px;top:471px;width:11px;height:1px;background:#dde2ec;"></div><svg style="position:absolute;left:1880px;top:464px;" width="9" height="16" viewBox="0 0 9 16"><path d="M1 6.0 L4.5 2.5 L8 6.0 Z M1 10.5 L4.5 14.0 L8 10.5 Z" fill="#222"/></svg><div style="position:absolute;left:1738px;top:481px;width:152px;height:1px;background:#d9dce6;"></div><div class="t" style="left:1738.5px;top:486.00px;font-size:12.2px;letter-spacing:-0.3px;color:#222;width:72px;overflow:hidden;">Y Target</div><div style="position:absolute;left:1816px;top:483px;width:74px;height:17px;background:#fff;"></div><div class="t" style="left:1820px;top:486.00px;font-size:12.2px;letter-spacing:-0.30px;color:#222;">229.757</div><div style="position:absolute;left:1878px;top:483px;width:1px;height:17px;background:#c9cfdd;"></div><div style="position:absolute;left:1879px;top:491px;width:11px;height:1px;background:#dde2ec;"></div><svg style="position:absolute;left:1880px;top:484px;" width="9" height="16" viewBox="0 0 9 16"><path d="M1 6.0 L4.5 2.5 L8 6.0 Z M1 10.5 L4.5 14.0 L8 10.5 Z" fill="#222"/></svg><div style="position:absolute;left:1738px;top:501px;width:152px;height:1px;background:#d9dce6;"></div><div class="t" style="left:1738.5px;top:506.00px;font-size:12.2px;letter-spacing:-0.3px;color:#222;width:72px;overflow:hidden;">Z Target</div><div style="position:absolute;left:1816px;top:503px;width:74px;height:17px;background:#fff;"></div><div class="t" style="left:1820px;top:506.00px;font-size:12.2px;letter-spacing:-0.30px;color:#222;">0.000</div><div style="position:absolute;left:1878px;top:503px;width:1px;height:17px;background:#c9cfdd;"></div><div style="position:absolute;left:1879px;top:511px;width:11px;height:1px;background:#dde2ec;"></div><svg style="position:absolute;left:1880px;top:504px;" width="9" height="16" viewBox="0 0 9 16"><path d="M1 6.0 L4.5 2.5 L8 6.0 Z M1 10.5 L4.5 14.0 L8 10.5 Z" fill="#222"/></svg><div style="position:absolute;left:1738px;top:521px;width:152px;height:1px;background:#d9dce6;"></div><div class="t" style="left:1738.5px;top:529.00px;font-size:12.2px;letter-spacing:-0.3px;color:#222;width:72px;overflow:hidden;">Location</div><div style="position:absolute;left:1816px;top:523px;width:72px;height:21px;background:#e9eaee;border:1px solid #b7bfd2;"></div><div class="t" style="left:1833px;top:529.00px;font-size:12.2px;letter-spacing:-0.30px;color:#222;">Place...</div><div style="position:absolute;left:1738px;top:547px;width:152px;height:1px;background:#d9dce6;"></div><div class="t" style="left:1722.3px;top:553.34px;font-size:13px;letter-spacing:-0.32px;color:#222;">Wallpaper</div><div style="position:absolute;left:1722px;top:570.3px;width:168px;height:1px;background:#d9dce6;"></div><div class="t" style="left:1738.5px;top:578.00px;font-size:12.2px;letter-spacing:-0.3px;color:#222;width:72px;overflow:hidden;">Filename</div><div style="position:absolute;left:1816px;top:572px;width:48px;height:21px;background:#fff;border:1px solid #c3c9d9;"></div><div class="t" style="left:1819px;top:578.00px;font-size:12.2px;letter-spacing:-0.30px;color:#666;">(none)</div><div style="position:absolute;left:1865px;top:572px;width:23px;height:21px;background:#e9eaee;border:1px solid #c3c9d9;"></div><div class="t" style="left:1872px;top:578.00px;font-size:12.2px;letter-spacing:-0.30px;color:#222;">...</div><div style="position:absolute;left:1738px;top:596px;width:152px;height:1px;background:#d9dce6;"></div><div class="t" style="left:1738.5px;top:601.00px;font-size:12.2px;letter-spacing:-0.3px;color:#222;width:72px;overflow:hidden;">Show</div><div style="position:absolute;left:1817px;top:600px;width:12px;height:12px;background:#fff;border:1px solid #b9c0d4;"></div><svg style="position:absolute;left:1817px;top:600px;" width="14" height="14" viewBox="0 0 14 14"><path d="M3.2 7.2 L5.8 10.2 L10.8 3.6" fill="none" stroke="#222" stroke-width="1.9"/></svg><div style="position:absolute;left:1738px;top:616px;width:152px;height:1px;background:#d9dce6;"></div><div class="t" style="left:1738.5px;top:621.00px;font-size:12.2px;letter-spacing:-0.3px;color:#222;width:72px;overflow:hidden;">Gray</div><div style="position:absolute;left:1817px;top:620px;width:12px;height:12px;background:#fff;border:1px solid #b9c0d4;"></div><svg style="position:absolute;left:1817px;top:620px;" width="14" height="14" viewBox="0 0 14 14"><path d="M3.2 7.2 L5.8 10.2 L10.8 3.6" fill="none" stroke="#222" stroke-width="1.9"/></svg><div style="position:absolute;left:1738px;top:635px;width:152px;height:1px;background:#d9dce6;"></div><svg style="position:absolute;left:1700px;top:60px;" width="218" height="160" viewBox="0 0 218 160"><g transform="translate(-1700 -60)"><defs>
<radialGradient id="rsph" cx="0.35" cy="0.3" r="0.8"><stop offset="0" stop-color="#e0e8ff"/><stop offset="0.5" stop-color="#3858d8"/><stop offset="1" stop-color="#0a1a70"/></radialGradient>
<linearGradient id="mon" x1="0" y1="0" x2="0" y2="1"><stop offset="0" stop-color="#e8e8e8"/><stop offset="1" stop-color="#8a8a8a"/></linearGradient>
</defs><path d="M1727 89 C1727 87.5 1728 87 1730 87 L1731.5 85.5 H1736 L1737 87 H1747 C1748.3 87 1749 87.8 1749 89 V100 C1749 101 1748.3 101.7 1747 101.7 H1729 C1727.7 101.7 1727 101 1727 100 Z" fill="#1e1e1e"/><rect x="1731" y="84.5" width="5" height="2" fill="#333"/><circle cx="1739.5" cy="95" r="5.2" fill="#2a2a2a" stroke="#aaa" stroke-width="0.8"/><circle cx="1739.5" cy="95" r="3" fill="#1a2a50"/><path d="M1738.5 97.5 L1741.5 93.5" stroke="#3aa03a" stroke-width="1"/><rect x="1758.5" y="83.5" width="23" height="20.5" fill="#d6d6d6" stroke="#555" stroke-width="1"/><rect x="1760.5" y="85.5" width="19" height="16.5" fill="#fff" stroke="#39b0f0" stroke-width="1.3"/><rect x="1762.5" y="87.5" width="15" height="12.5" fill="#fff" stroke="#e00" stroke-width="1.3"/><circle cx="1810" cy="86.5" r="2.7" fill="url(#rsph)"/><circle cx="1805.5" cy="91.5" r="3.8" fill="url(#rsph)"/><circle cx="1798" cy="98.5" r="5.5" fill="url(#rsph)"/><ellipse cx="1799" cy="104" rx="4" ry="1" fill="#999" opacity="0.5"/><path d="M1901.5 89.5 C1905 88.5 1910 89.5 1914.5 92 L1913.5 96 C1910 97 1906 97.5 1904 98.5 Z" fill="#f05a28" stroke="#333" stroke-width="0.5"/><path d="M1902 91 L1904.5 97.5 L1906 99 L1902 96 Z" fill="#fff"/><path d="M1904 98.5 C1907 97.5 1910.5 97 1913.5 96 L1913.7 98 C1910 99 1907 100 1905.5 100.5 Z" fill="#3050b0"/><path d="M1906.34 124.32 A6.4 6.4 0 0 1 1909.66 124.32 L1908.93 127.02 A3.6 3.6 0 0 0 1907.07 127.02 Z" fill="#ff0000" stroke="#ff0000" stroke-width="0.4"/><path d="M1909.66 124.32 A6.4 6.4 0 0 1 1912.53 125.97 L1910.55 127.95 A3.6 3.6 0 0 0 1908.93 127.02 Z" fill="#ff8000" stroke="#ff8000" stroke-width="0.4"/><path d="M1912.53 125.97 A6.4 6.4 0 0 1 1914.18 128.84 L1911.48 129.57 A3.6 3.6 0 0 0 1910.55 127.95 Z" fill="#ffff00" stroke="#ffff00" stroke-width="0.4"/><path d="M1914.18 128.84 A6.4 6.4 0 0 1 1914.18 132.16 L1911.48 131.43 A3.6 3.6 0 0 0 1911.48 129.57 Z" fill="#80ff00" stroke="#80ff00" stroke-width="0.4"/><path d="M1914.18 132.16 A6.4 6.4 0 0 1 1912.53 135.03 L1910.55 133.05 A3.6 3.6 0 0 0 1911.48 131.43 Z" fill="#00ff00" stroke="#00ff00" stroke-width="0.4"/><path d="M1912.53 135.03 A6.4 6.4 0 0 1 1909.66 136.68 L1908.93 133.98 A3.6 3.6 0 0 0 1910.55 133.05 Z" fill="#00ff80" stroke="#00ff80" stroke-width="0.4"/><path d="M1909.66 136.68 A6.4 6.4 0 0 1 1906.34 136.68 L1907.07 133.98 A3.6 3.6 0 0 0 1908.93 133.98 Z" fill="#00ffff" stroke="#00ffff" stroke-width="0.4"/><path d="M1906.34 136.68 A6.4 6.4 0 0 1 1903.47 135.03 L1905.45 133.05 A3.6 3.6 0 0 0 1907.07 133.98 Z" fill="#0080ff" stroke="#0080ff" stroke-width="0.4"/><path d="M1903.47 135.03 A6.4 6.4 0 0 1 1901.82 132.16 L1904.52 131.43 A3.6 3.6 0 0 0 1905.45 133.05 Z" fill="#0000ff" stroke="#0000ff" stroke-width="0.4"/><path d="M1901.82 132.16 A6.4 6.4 0 0 1 1901.82 128.84 L1904.52 129.57 A3.6 3.6 0 0 0 1904.52 131.43 Z" fill="#8000ff" stroke="#8000ff" stroke-width="0.4"/><path d="M1901.82 128.84 A6.4 6.4 0 0 1 1903.47 125.97 L1905.45 127.95 A3.6 3.6 0 0 0 1904.52 129.57 Z" fill="#ff00ff" stroke="#ff00ff" stroke-width="0.4"/><path d="M1903.47 125.97 A6.4 6.4 0 0 1 1906.34 124.32 L1907.07 127.02 A3.6 3.6 0 0 0 1905.45 127.95 Z" fill="#ff0080" stroke="#ff0080" stroke-width="0.4"/><circle cx="1908" cy="130.5" r="6.4" fill="none" stroke="#333" stroke-width="0.6"/><circle cx="1908" cy="130.5" r="3.6" fill="#fff" stroke="#555" stroke-width="0.5"/><rect x="1901" y="159.5" width="14" height="10.5" fill="url(#mon)" stroke="#111" stroke-width="1.3"/><path d="M1906 172.5 H1910 M1908 170 V172.5" stroke="#111" stroke-width="1.5"/><rect x="1901.2" y="195.3" width="13.5" height="13" fill="#3a5ad0" stroke="#555" stroke-width="1"/><rect x="1901.2" y="195.3" width="13.5" height="2.2" fill="#2a3a8a"/><ellipse cx="1908" cy="203.5" rx="5.5" ry="3.8" fill="#5a7ae8"/><text x="1908" y="207.3" font-family="Liberation Serif" font-weight="bold" font-size="9.5" text-anchor="middle" fill="#fff">?</text></g></svg><div style="position:absolute;left:24px;top:884px;width:12px;height:12px;background:#fff;border:1px solid #b9c0d4;"></div><svg style="position:absolute;left:24px;top:884px;" width="14" height="14" viewBox="0 0 14 14"><path d="M3.2 7.2 L5.8 10.2 L10.8 3.6" fill="none" stroke="#5a5a5a" stroke-width="1.9"/></svg><div class="t" style="left:43.2px;top:884.80px;font-size:12.2px;letter-spacing:-0.30px;color:#5b5b5b;">End</div><div style="position:absolute;left:72px;top:884px;width:12px;height:12px;background:#fff;border:1px solid #b9c0d4;"></div><svg style="position:absolute;left:72px;top:884px;" width="14" height="14" viewBox="0 0 14 14"><path d="M3.2 7.2 L5.8 10.2 L10.8 3.6" fill="none" stroke="#5a5a5a" stroke-width="1.9"/></svg><div class="t" style="left:91.2px;top:884.80px;font-size:12.2px;letter-spacing:-0.30px;color:#5b5b5b;">Near</div><div style="position:absolute;left:126px;top:884px;width:12px;height:12px;background:#fff;border:1px solid #b9c0d4;"></div><svg style="position:absolute;left:126px;top:884px;" width="14" height="14" viewBox="0 0 14 14"><path d="M3.2 7.2 L5.8 10.2 L10.8 3.6" fill="none" stroke="#5a5a5a" stroke-width="1.9"/></svg><div class="t" style="left:144.5px;top:884.80px;font-size:12.2px;letter-spacing:-0.30px;color:#5b5b5b;">Point</div><div style="position:absolute;left:181px;top:884px;width:12px;height:12px;background:#fff;border:1px solid #b9c0d4;"></div><div class="t" style="left:200px;top:884.80px;font-size:12.2px;letter-spacing:-0.30px;color:#5b5b5b;">Mid</div><div style="position:absolute;left:230px;top:884px;width:12px;height:12px;background:#fff;border:1px solid #b9c0d4;"></div><div class="t" style="left:248.9px;top:884.80px;font-size:12.2px;letter-spacing:-0.30px;color:#5b5b5b;">Cen</div><div style="position:absolute;left:280px;top:884px;width:12px;height:12px;background:#fff;border:1px solid #b9c0d4;"></div><div class="t" style="left:298.4px;top:884.80px;font-size:12.2px;letter-spacing:-0.30px;color:#5b5b5b;">Int</div><div style="position:absolute;left:321px;top:884px;width:12px;height:12px;background:#fff;border:1px solid #b9c0d4;"></div><div class="t" style="left:339.7px;top:884.80px;font-size:12.2px;letter-spacing:-0.30px;color:#5b5b5b;">Perp</div><div style="position:absolute;left:374px;top:884px;width:12px;height:12px;background:#fff;border:1px solid #b9c0d4;"></div><div class="t" style="left:392.3px;top:884.80px;font-size:12.2px;letter-spacing:-0.30px;color:#5b5b5b;">Tan</div><div style="position:absolute;left:420px;top:884px;width:12px;height:12px;background:#fff;border:1px solid #b9c0d4;"></div><div class="t" style="left:439.2px;top:884.80px;font-size:12.2px;letter-spacing:-0.30px;color:#5b5b5b;">Quad</div><div style="position:absolute;left:478px;top:884px;width:12px;height:12px;background:#fff;border:1px solid #b9c0d4;"></div><div class="t" style="left:496.2px;top:884.80px;font-size:12.2px;letter-spacing:-0.30px;color:#5b5b5b;">Knot</div><div style="position:absolute;left:530px;top:884px;width:12px;height:12px;background:#fff;border:1px solid #b9c0d4;"></div><div class="t" style="left:549.2px;top:884.80px;font-size:12.2px;letter-spacing:-0.30px;color:#5b5b5b;">Vertex</div><div style="position:absolute;left:589px;top:884px;width:12px;height:12px;background:#fff;border:1px solid #b9c0d4;"></div><div class="t" style="left:608.1px;top:884.80px;font-size:12.2px;letter-spacing:-0.30px;color:#5b5b5b;">Project</div><div style="position:absolute;left:662px;top:884px;width:12px;height:12px;background:#fff;border:1px solid #b9c0d4;"></div><svg style="position:absolute;left:662px;top:884px;" width="14" height="14" viewBox="0 0 14 14"><path d="M3.2 7.2 L5.8 10.2 L10.8 3.6" fill="none" stroke="#111" stroke-width="1.9"/></svg><div class="t" style="left:681.3px;top:884.80px;font-size:12.2px;letter-spacing:-0.30px;color:#1f1f1f;">Disable</div><div class="t" style="left:-6px;top:885px;font-size:12.2px;letter-spacing:-0.3px;color:#6b6b6b;transform:rotate(-90deg);transform-origin:50% 50%;width:36px;text-align:center;">Osnap</div><div style="position:absolute;left:2px;top:911px;width:1916px;height:20px;background:#e9eaee;"></div><svg style="position:absolute;left:7px;top:915px;" width="14" height="14" viewBox="0 0 14 14"><rect x="1" y="1" width="12" height="12" fill="#fff" stroke="#444" stroke-width="2"/><rect x="0" y="0" width="5" height="14" fill="#444"/></svg><svg style="position:absolute;left:1899px;top:915px;" width="14" height="14" viewBox="0 0 14 14"><rect x="1" y="1" width="12" height="12" fill="#fff" stroke="#444" stroke-width="2"/><rect x="9" y="0" width="5" height="14" fill="#444"/></svg><div class="t" style="left:41.3px;top:915.60px;font-size:12.2px;letter-spacing:-0.30px;color:#3a3a3a;">CPlane</div><div class="t" style="left:119.4px;top:915.60px;font-size:12.2px;letter-spacing:-0.30px;color:#3a3a3a;">x -4.549</div><div class="t" style="left:200px;top:915.60px;font-size:12.2px;letter-spacing:-0.30px;color:#3a3a3a;">y 246.950</div><div class="t" style="left:302.5px;top:915.60px;font-size:12.2px;letter-spacing:-0.30px;color:#3a3a3a;">z 0</div><div class="t" style="left:392.3px;top:915.60px;font-size:12.2px;letter-spacing:-0.30px;color:#3a3a3a;">Feet</div><div class="t" style="left:479.7px;top:915.60px;font-size:12.2px;letter-spacing:-0.30px;color:#3a3a3a;">Default</div><div class="t" style="left:655.5px;top:915.60px;font-size:12.2px;letter-spacing:-0.30px;color:#3a3a3a;">Grid Snap</div><div class="t" style="left:727.7px;top:915.60px;font-size:12.2px;letter-spacing:-0.30px;color:#3a3a3a;">Ortho</div><div class="t" style="left:832.7px;top:915.60px;font-size:12.2px;letter-spacing:-0.30px;color:#3a3a3a;">Osnap</div><div class="t" style="left:888.8px;top:915.60px;font-size:12.2px;letter-spacing:-0.30px;color:#3a3a3a;">SmartTrack</div><div class="t" style="left:971.4px;top:915.60px;font-size:12.2px;letter-spacing:-0.30px;color:#3a3a3a;">Gumball (CPlane)</div><div class="t" style="left:1102.8px;top:915.60px;font-size:12.2px;letter-spacing:-0.30px;color:#3a3a3a;">Auto CPlane (Object)</div><div class="t" style="left:1238px;top:915.60px;font-size:12.2px;letter-spacing:-0.30px;color:#3a3a3a;">Record History</div><div class="t" style="left:1338.6px;top:915.60px;font-size:12.2px;letter-spacing:-0.30px;color:#3a3a3a;">Filter</div><div class="t" style="left:1387.6px;top:915.60px;font-size:12.2px;letter-spacing:-0.30px;color:#3a3a3a;">Available physical memory: 22059 MB</div><div style="position:absolute;left:457px;top:913px;width:16px;height:16px;background:#000;"></div><div style="position:absolute;left:770px;top:912px;width:51px;height:19px;background:#ccd5ea;border-radius:2px;"></div><div class="t" style="left:778.3px;top:915.60px;font-size:12.2px;letter-spacing:-0.30px;color:#1f1f1f;font-weight:bold;">Planar</div><svg style="position:absolute;left:1080px;top:915px;" width="12" height="14" viewBox="0 0 12 14"><path d="M3 6 V4 A3 3 0 0 1 9 4 V6" fill="none" stroke="#bbb" stroke-width="1.2"/><rect x="1.5" y="6" width="9" height="7" fill="none" stroke="#bbb" stroke-width="1.2"/></svg>
</body></html>
